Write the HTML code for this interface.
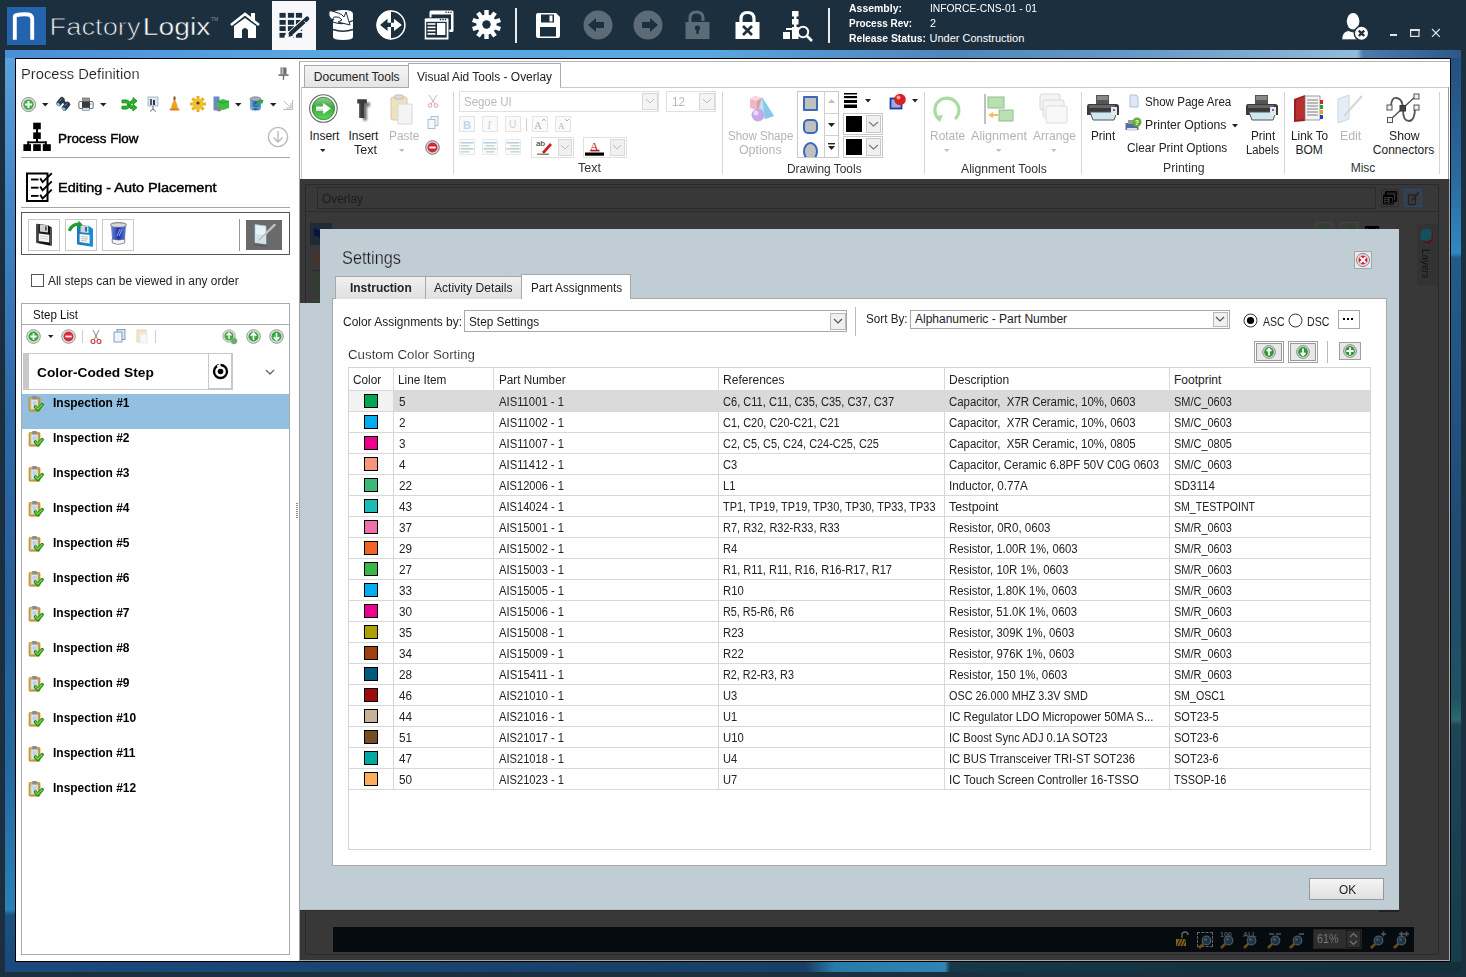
<!DOCTYPE html>
<html><head><meta charset="utf-8"><style>*{margin:0;padding:0;box-sizing:border-box}
html,body{width:1466px;height:977px;overflow:hidden;background:#1c2f3e;font-family:"Liberation Sans",sans-serif;font-size:12px;color:#222;position:relative}
.a{position:absolute}
.t{position:absolute;white-space:nowrap;line-height:1}
svg.a{overflow:visible}
</style></head><body><div class="a" style="left:5px;top:50px;width:1456px;height:8px;background:linear-gradient(90deg,#4a8ed6 0,#5aa6e0 300px,#5ba8e0 700px,#5596d0 800px,#4f86bc 950px,#6a9cc8 1150px,#93bad8 1352px,#4c7caa 1358px,#2c5888 1456px)"></div><div class="a" style="left:5px;top:58px;width:10px;height:914px;background:linear-gradient(180deg,#5aa2dd 0,#4184c6 150px,#2e6aaa 350px,#25609a 550px,#2468a0 700px,#2a80b8 852px,#1b5082 857px,#184a7a 914px)"></div><div class="a" style="left:1451px;top:58px;width:10px;height:914px;background:linear-gradient(180deg,#24507e 0,#2a6aa0 120px,#3088c0 195px,#235a88 200px,#215282 350px,#1f4a70 492px,#1e5262 640px,#2a6a70 662px,#1c4555 667px,#173c4c 914px)"></div><div class="a" style="left:5px;top:962px;width:1456px;height:10px;background:linear-gradient(90deg,#1a4a7c 0,#184470 400px,#173e66 800px,#2a7aa8 830px,#2f84b4 940px,#15384a 945px,#13333f 1200px,#12303c 1456px)"></div><div class="a" style="left:0px;top:0px;width:1466px;height:50px;background:#1c2f3e"></div><div class="a" style="left:7px;top:7px;width:39px;height:38px;background:#2463ae"></div><svg class="a" style="left:7px;top:7px" width="39" height="38" viewBox="0 0 39 38"><path d="M7.8 32.7 V10.2 Q7.8 8.3 10 8 Q16 6.7 21.5 7.5 Q25.2 8.3 25.2 12 V32.7" fill="none" stroke="#fff" stroke-width="3.9"/></svg><svg class="a" style="left:0px;top:0px" width="240" height="50"><text x="49.6" y="35" font-family="Liberation Sans" font-size="23" fill="#f4f6f8" stroke="#1c2f3e" stroke-width="0.75" textLength="91" lengthAdjust="spacingAndGlyphs">Factory</text><text x="142.8" y="35" font-family="Liberation Sans" font-size="23" fill="#ffffff" stroke="#1c2f3e" stroke-width="0.45" textLength="67.5" lengthAdjust="spacingAndGlyphs">Logix</text><text x="211" y="21" font-family="Liberation Sans" font-size="5" fill="#8090a0">TM</text></svg><svg class="a" style="left:229px;top:12px" width="32" height="28" viewBox="0 0 32 28"><path d="M2 13 L16 2 L30 13" fill="none" stroke="#fff" stroke-width="2.6"/><rect x="22" y="1" width="4" height="8" fill="#fff"/><path d="M5 14 L16 6 L27 14 V26 H19 V18 Q16 14 13 18 V26 H5 Z" fill="#fff"/></svg><div class="a" style="left:272px;top:1px;width:44px;height:49px;background:#f8f8fb"></div><svg class="a" style="left:272px;top:0px" width="44" height="50" viewBox="0 0 44 50"><rect x="7.5" y="12.9" width="6.2" height="4.8" fill="#1c2f3e"/><rect x="15.9" y="12.9" width="6.2" height="4.8" fill="#1c2f3e"/><rect x="23.9" y="12.9" width="6.2" height="4.8" fill="#1c2f3e"/><rect x="7.5" y="20.0" width="6.2" height="4.8" fill="#1c2f3e"/><rect x="15.9" y="20.0" width="6.2" height="4.8" fill="#1c2f3e"/><rect x="23.9" y="20.0" width="6.2" height="4.8" fill="#1c2f3e"/><rect x="7.5" y="26.2" width="6.2" height="4.8" fill="#1c2f3e"/><rect x="15.9" y="26.2" width="6.2" height="4.8" fill="#1c2f3e"/><rect x="23.9" y="26.2" width="6.2" height="4.8" fill="#1c2f3e"/><rect x="7.5" y="32.9" width="6.2" height="4.8" fill="#1c2f3e"/><rect x="15.9" y="32.9" width="6.2" height="4.8" fill="#1c2f3e"/><rect x="23.9" y="32.9" width="6.2" height="4.8" fill="#1c2f3e"/><path d="M16.4 36.9 L36 18.5" stroke="#f8f8fb" stroke-width="7.5" stroke-linecap="round"/><path d="M18.6 33.6 L35.2 18.6" stroke="#1c2f3e" stroke-width="4.2" stroke-linecap="round"/><path d="M16.5 37 L17.5 32.5 L21 35.5 Z" fill="#1c2f3e"/><path d="M32.3 21.2 L34.1 23.1" stroke="#f8f8fb" stroke-width="0.9"/></svg><svg class="a" style="left:326px;top:8px" width="30" height="34" viewBox="0 0 30 34"><path d="M7 6 Q7 2 17 2 Q27 2 27 6 V29 Q27 32 17 32 Q7 32 7 29 Z" fill="#fff"/><path d="M7 14 Q17 18 27 12.5" fill="none" stroke="#1c2f3e" stroke-width="1.3"/><path d="M7 21.5 Q17 25 27 21.5" fill="none" stroke="#1c2f3e" stroke-width="1.6"/><path d="M3 4 Q3 2 6 3 L12 5 Q16 6 18 9 L20 4 L24 17 L12 14 L16 12 Q13 8 10 9 L8 9 Q6 11 8 12 L5 11 Q2 8 3 4 Z" fill="#fff" stroke="#1c2f3e" stroke-width="1"/></svg><svg class="a" style="left:376px;top:10px" width="30" height="30" viewBox="0 0 30 30"><circle cx="15" cy="15" r="13.9" fill="#1c2f3e" stroke="#fff" stroke-width="1.5"/><path d="M15 0.5 A14.5 14.5 0 0 0 15 29.5 Z" fill="#fff"/><path d="M4.1 15 L11.5 8.8 V12.8 H15 V17.1 H11.5 V21 Z" fill="#1c2f3e"/><path d="M25.9 15 L18 8.8 V12.8 H15 V17.1 H18 V21 Z" fill="#fff"/></svg><svg class="a" style="left:423px;top:9px" width="32" height="32" viewBox="0 0 32 32"><rect x="6.5" y="1.5" width="24" height="21.5" rx="1.5" fill="#fff"/><rect x="8.5" y="5.5" width="19.5" height="15" fill="#1c2f3e"/><rect x="1.3" y="8.9" width="24.6" height="22" rx="1.5" fill="#fff" stroke="#1c2f3e" stroke-width="0.8"/><rect x="3.2" y="12.8" width="20.5" height="15.8" fill="#1c2f3e"/><rect x="4.5" y="14.2" width="8" height="1.6" fill="#fff"/><rect x="4.5" y="17.5" width="8" height="1.6" fill="#fff"/><rect x="4.5" y="20.8" width="8" height="1.6" fill="#fff"/><rect x="4.5" y="24.1" width="8" height="1.6" fill="#fff"/><rect x="14" y="14" width="8.3" height="12" fill="#fff"/><circle cx="22.5" cy="10.6" r="0.8" fill="#1c2f3e"/><circle cx="20" cy="10.6" r="0.8" fill="#1c2f3e"/><circle cx="17.5" cy="10.6" r="0.8" fill="#1c2f3e"/><circle cx="28" cy="3.3" r="0.8" fill="#1c2f3e"/><circle cx="25.5" cy="3.3" r="0.8" fill="#1c2f3e"/><circle cx="23" cy="3.3" r="0.8" fill="#1c2f3e"/></svg><svg class="a" style="left:472px;top:10px" width="29" height="29" viewBox="0 0 29 29"><rect x="12.3" y="0" width="4.4" height="6" fill="#fff" transform="rotate(0 14.5 14.5)"/><rect x="12.3" y="0" width="4.4" height="6" fill="#fff" transform="rotate(36 14.5 14.5)"/><rect x="12.3" y="0" width="4.4" height="6" fill="#fff" transform="rotate(72 14.5 14.5)"/><rect x="12.3" y="0" width="4.4" height="6" fill="#fff" transform="rotate(108 14.5 14.5)"/><rect x="12.3" y="0" width="4.4" height="6" fill="#fff" transform="rotate(144 14.5 14.5)"/><rect x="12.3" y="0" width="4.4" height="6" fill="#fff" transform="rotate(180 14.5 14.5)"/><rect x="12.3" y="0" width="4.4" height="6" fill="#fff" transform="rotate(216 14.5 14.5)"/><rect x="12.3" y="0" width="4.4" height="6" fill="#fff" transform="rotate(252 14.5 14.5)"/><rect x="12.3" y="0" width="4.4" height="6" fill="#fff" transform="rotate(288 14.5 14.5)"/><rect x="12.3" y="0" width="4.4" height="6" fill="#fff" transform="rotate(324 14.5 14.5)"/><circle cx="14.5" cy="14.5" r="10" fill="#fff"/><circle cx="14.5" cy="14.5" r="4.2" fill="#1c2f3e"/></svg><div class="a" style="left:515px;top:8px;width:2px;height:35px;background:#e8ecef"></div><svg class="a" style="left:535px;top:13px" width="26" height="25" viewBox="0 0 26 25"><path d="M1 2 Q1 0 3 0 H21 L25 4 V23 Q25 25 23 25 H3 Q1 25 1 23 Z" fill="#fff"/><rect x="6" y="1.5" width="13" height="8" fill="#1c2f3e"/><rect x="14.5" y="2.5" width="3" height="6" fill="#fff"/><rect x="5" y="14" width="16" height="9.5" fill="#1c2f3e"/></svg><svg class="a" style="left:583px;top:10px" width="30" height="30" viewBox="0 0 30 30"><circle cx="15" cy="15" r="14.5" fill="#5b6c78"/><path d="M5 15 L13 8 V12 H21 V18 H13 V22 Z" fill="#1c2f3e"/></svg><svg class="a" style="left:633px;top:10px" width="30" height="30" viewBox="0 0 30 30"><circle cx="15" cy="15" r="14.5" fill="#5b6c78"/><path d="M25 15 L17 8 V12 H9 V18 H17 V22 Z" fill="#1c2f3e"/></svg><svg class="a" style="left:685px;top:11px" width="26" height="29" viewBox="0 0 26 29"><path d="M5 12 V7 Q5 1 11.5 1 Q18 1 18 7 V10" fill="none" stroke="#5b6c78" stroke-width="3"/><rect x="0.5" y="11" width="24" height="17" fill="#5b6c78"/><circle cx="12.5" cy="17" r="2.6" fill="#1c2f3e"/><rect x="11.3" y="17" width="2.4" height="6" fill="#1c2f3e"/></svg><svg class="a" style="left:735px;top:11px" width="26" height="29" viewBox="0 0 26 29"><path d="M6 13 V8 Q6 1.5 12.5 1.5 Q19 1.5 19 8 V13" fill="none" stroke="#fff" stroke-width="3.2"/><rect x="0.5" y="11" width="24" height="17" fill="#fff"/><path d="M8 15 L17 24 M17 15 L8 24" stroke="#1c2f3e" stroke-width="2.6"/></svg><svg class="a" style="left:782px;top:10px" width="32" height="32" viewBox="0 0 32 32"><rect x="10" y="1" width="6.5" height="5.5" fill="#fff"/><rect x="10" y="9" width="6.5" height="5.5" fill="#fff"/><rect x="12" y="6" width="2.5" height="3" fill="#fff"/><rect x="12" y="14" width="2.5" height="4" fill="#fff"/><rect x="1" y="22" width="7" height="7" fill="#fff"/><rect x="10" y="17" width="6.5" height="12" fill="#fff"/><rect x="4" y="18" width="12" height="2" fill="#fff"/><circle cx="21" cy="22" r="5.2" fill="#1c2f3e" stroke="#fff" stroke-width="2"/><path d="M24.5 25.5 L30 31" stroke="#fff" stroke-width="2.6"/></svg><div class="a" style="left:828px;top:8px;width:2px;height:35px;background:#e8ecef"></div><div class="t" style="left:849.30px;top:2.69px;font-size:11px;font-weight:700;color:#ffffff;transform:scaleX(0.9526);transform-origin:0 0;">Assembly:</div><div class="t" style="left:849.30px;top:18.19px;font-size:11px;font-weight:700;color:#ffffff;transform:scaleX(0.9038);transform-origin:0 0;">Process Rev:</div><div class="t" style="left:849.30px;top:33.39px;font-size:11px;font-weight:700;color:#ffffff;transform:scaleX(0.9399);transform-origin:0 0;">Release Status:</div><div class="t" style="left:929.50px;top:2.69px;font-size:11px;font-weight:400;color:#ffffff;transform:scaleX(0.9362);transform-origin:0 0;">INFORCE-CNS-01 - 01</div><div class="t" style="left:929.50px;top:18.19px;font-size:11px;font-weight:400;color:#ffffff;transform:scaleX(0.9780);transform-origin:0 0;">2</div><div class="t" style="left:929.50px;top:33.39px;font-size:11px;font-weight:400;color:#ffffff;">Under Construction</div><svg class="a" style="left:1340px;top:12px" width="30" height="30" viewBox="0 0 30 30"><ellipse cx="13.1" cy="9.3" rx="6.3" ry="8.3" fill="#fff"/><path d="M1.8 27.8 Q1.8 19.5 8.5 18.6 Q13 21.5 17.5 18.6 Q24 19.5 24 27.8 Z" fill="#fff" stroke="#1c2f3e" stroke-width="0.8"/><circle cx="21.5" cy="21.3" r="7.2" fill="#fff" stroke="#1c2f3e" stroke-width="1.5"/><path d="M18.8 18.6 L24.2 24 M24.2 18.6 L18.8 24" stroke="#1c2f3e" stroke-width="2.3"/></svg><div class="a" style="left:1390px;top:34px;width:7px;height:2px;background:#e4e4e4"></div><svg class="a" style="left:1410px;top:29px" width="10" height="9" viewBox="0 0 10 9"><rect x="0.6" y="0.6" width="8.4" height="6.8" fill="none" stroke="#e4e4e4" stroke-width="1.2"/><rect x="0" y="0" width="9.6" height="2" fill="#e4e4e4"/></svg><svg class="a" style="left:1431px;top:28px" width="10" height="10" viewBox="0 0 10 10"><path d="M1 1 L8.8 8.8 M8.8 1 L1 8.8" stroke="#e4e4e4" stroke-width="1.2"/></svg><div class="a" style="left:15px;top:58px;width:1436px;height:904px;background:#fff;border:1px solid #000"></div><div class="t" style="left:20.50px;top:67.47px;font-size:14.8px;font-weight:400;color:#222;transform:scaleX(0.9943);transform-origin:0 0;-webkit-text-stroke:0.15px #fff;">Process Definition</div><svg class="a" style="left:278px;top:67px" width="11" height="13" viewBox="0 0 11 13"><path d="M2.5 0.5 H8.5 V7.5 H2.5 Z" fill="#6e6e6e"/><rect x="3.5" y="1" width="2" height="6.5" fill="#b8b8b8"/><rect x="0.5" y="7.3" width="10" height="1.6" fill="#6e6e6e"/><rect x="4.8" y="8.8" width="1.4" height="4" fill="#6e6e6e"/></svg><svg class="a" style="left:21px;top:97px" width="15" height="15" viewBox="0 0 15 15"><circle cx="7.5" cy="7.5" r="7" fill="#e8e8e8" stroke="#888" stroke-width="1"/><circle cx="7.5" cy="7.5" r="5.2" fill="#3cb043"/><path d="M7.5 4 V11 M4 7.5 H11" stroke="#fff" stroke-width="2"/></svg><svg class="a" style="left:42px;top:103px" width="7" height="4" viewBox="0 0 7 4"><path d="M0 0 H6.5 L3.25 3.5 Z" fill="#222"/></svg><svg class="a" style="left:55px;top:97px" width="16" height="14" viewBox="0 0 16 14"><g transform="rotate(40 8 7) scale(0.9) translate(1,0)"><rect x="1" y="2" width="6" height="11" rx="2.5" fill="#2a3a4a"/><rect x="9" y="2" width="6" height="11" rx="2.5" fill="#2a3a4a"/><rect x="6" y="4" width="4" height="3" fill="#2a3a4a"/><ellipse cx="4" cy="11.5" rx="2.2" ry="1.6" fill="#7cc4f0"/><ellipse cx="12" cy="11.5" rx="2.2" ry="1.6" fill="#7cc4f0"/><path d="M3 4 V8 M11 4 V8" stroke="#9ab" stroke-width="0.8"/></g></svg><svg class="a" style="left:78px;top:97px" width="16" height="14" viewBox="0 0 16 14"><rect x="4.5" y="1" width="7" height="4.5" fill="#999" stroke="#555" stroke-width="0.6"/><rect x="0.8" y="4.5" width="14.4" height="7" rx="1.2" fill="#fafafa" stroke="#444" stroke-width="0.8"/><rect x="4" y="5" width="8" height="6" fill="#3a3a3a"/><rect x="4.3" y="10.8" width="7.4" height="2.4" fill="#bfeaf4" stroke="#555" stroke-width="0.5"/><circle cx="13" cy="7" r="0.6" fill="#22f"/></svg><svg class="a" style="left:100px;top:103px" width="7" height="4" viewBox="0 0 7 4"><path d="M0 0 H6.5 L3.25 3.5 Z" fill="#222"/></svg><svg class="a" style="left:121px;top:96px" width="17" height="16" viewBox="0 0 17 16"><path d="M1 4 H5.5 Q7.5 4 8.5 6 L10 9 Q10.8 10.5 12 10.5 V8.5 L16 11.5 L12 15 V13 Q9 13 8 11 L6.5 8 Q6 6.8 5 6.8 H1 Z" fill="#28b428" stroke="#158a15" stroke-width="0.9"/><path d="M1 13 V10.2 H5 Q6 10.2 6.5 9.3 L7.2 8 L8.5 10.6 Q7.5 13 5.5 13 Z" fill="#28b428" stroke="#158a15" stroke-width="0.9"/><path d="M9.2 6 Q10.3 4 12 4 V1.5 L16 5 L12 8.5 V6.8 Q11 6.8 10.5 7.6 Z" fill="#28b428" stroke="#158a15" stroke-width="0.9"/></svg><svg class="a" style="left:147px;top:96px" width="12" height="16" viewBox="0 0 12 16"><rect x="1" y="1" width="10" height="9" fill="#dde8f4" stroke="#9ab" stroke-width="0.8"/><rect x="3" y="3" width="2" height="6" fill="#555"/><rect x="6" y="4" width="2" height="5" fill="#335"/><path d="M6 10 V13 M6 13 L3 15.5 M6 13 L9 15.5" stroke="#666" stroke-width="1"/></svg><svg class="a" style="left:169px;top:96px" width="11" height="16" viewBox="0 0 11 16"><rect x="4.5" y="0.5" width="2" height="4" fill="#8a5020"/><path d="M2 13 Q3 6 5.5 4 Q8 6 9 13 Z" fill="#f0a020"/><rect x="0.5" y="12.5" width="10" height="2" rx="1" fill="#e08010"/></svg><svg class="a" style="left:190px;top:96px" width="16" height="16" viewBox="0 0 16 16"><rect x="6.5" y="0" width="3" height="4" fill="#e8b020" transform="rotate(0 8 8)"/><rect x="6.5" y="0" width="3" height="4" fill="#e8b020" transform="rotate(45 8 8)"/><rect x="6.5" y="0" width="3" height="4" fill="#e8b020" transform="rotate(90 8 8)"/><rect x="6.5" y="0" width="3" height="4" fill="#e8b020" transform="rotate(135 8 8)"/><rect x="6.5" y="0" width="3" height="4" fill="#e8b020" transform="rotate(180 8 8)"/><rect x="6.5" y="0" width="3" height="4" fill="#e8b020" transform="rotate(225 8 8)"/><rect x="6.5" y="0" width="3" height="4" fill="#e8b020" transform="rotate(270 8 8)"/><rect x="6.5" y="0" width="3" height="4" fill="#e8b020" transform="rotate(315 8 8)"/><circle cx="8" cy="8" r="5.5" fill="#f0c030"/><circle cx="8" cy="7" r="1.6" fill="#444"/></svg><svg class="a" style="left:213px;top:96px" width="16" height="16" viewBox="0 0 16 16"><rect x="0.5" y="0.5" width="6" height="14" fill="#6a8ac8"/><path d="M4 5 L10 3 L16 5 V12 L10 14 L4 12 Z" fill="#3cc040"/><path d="M4 5 L10 7 L16 5" stroke="#2a9a2a" fill="none"/><circle cx="6" cy="13" r="2.5" fill="#888"/></svg><svg class="a" style="left:235px;top:103px" width="7" height="4" viewBox="0 0 7 4"><path d="M0 0 H6.5 L3.25 3.5 Z" fill="#222"/></svg><svg class="a" style="left:249px;top:96px" width="15" height="16" viewBox="0 0 15 16"><defs><linearGradient id="db1" x1="0" x2="1"><stop offset="0" stop-color="#7ab8e8"/><stop offset=".5" stop-color="#1a5aa8"/><stop offset="1" stop-color="#5a9ad8"/></linearGradient></defs><path d="M1 3 V13 Q6.5 16 12 13 V3" fill="url(#db1)"/><ellipse cx="6.5" cy="3" rx="5.5" ry="2.2" fill="#aab" stroke="#667" stroke-width="0.6"/><ellipse cx="6.5" cy="13.2" rx="5.5" ry="1.6" fill="none" stroke="#ccd" stroke-width="0.6"/><path d="M6 10 L12 5" stroke="#22b040" stroke-width="2.2"/><path d="M10 3.5 L14.5 4 L13 8.5 Z" fill="#22b040"/></svg><svg class="a" style="left:270px;top:103px" width="7" height="4" viewBox="0 0 7 4"><path d="M0 0 H6.5 L3.25 3.5 Z" fill="#222"/></svg><svg class="a" style="left:283px;top:100px" width="10" height="10" viewBox="0 0 10 10"><path d="M1 1 L8 8 M8 3 V8 H3 M9.5 0 V9.5 H0" stroke="#bbb" stroke-width="1" fill="none"/></svg><svg class="a" style="left:23px;top:122px" width="28" height="30" viewBox="0 0 28 30"><rect x="10.2" y="0.7" width="7.6" height="6.6" fill="#000"/><rect x="10.2" y="10.4" width="7.6" height="6.6" fill="#000"/><rect x="13" y="7" width="2" height="4" fill="#000"/><rect x="13" y="17" width="2" height="3" fill="#000"/><rect x="4.3" y="19.4" width="19.4" height="1.8" fill="#000"/><rect x="4.3" y="19.4" width="1.8" height="4" fill="#000"/><rect x="21.9" y="19.4" width="1.8" height="4" fill="#000"/><rect x="0.4" y="22.2" width="7.6" height="6.8" fill="#000"/><rect x="10.2" y="22.2" width="7.6" height="6.8" fill="#000"/><rect x="19.8" y="22.2" width="8" height="6.8" fill="#000"/></svg><div class="t" style="left:57.60px;top:131.77px;font-size:13.5px;font-weight:400;color:#000;transform:scaleX(0.9936);transform-origin:0 0;-webkit-text-stroke:0.45px #000;">Process Flow</div><svg class="a" style="left:267px;top:126px" width="22" height="22" viewBox="0 0 22 22"><circle cx="11" cy="11" r="9.6" fill="none" stroke="#bbb" stroke-width="1.4"/><path d="M11 5 V16 M6.5 11.5 L11 16 L15.5 11.5" fill="none" stroke="#bbb" stroke-width="1.4"/></svg><div class="a" style="left:21px;top:157px;width:269px;height:1px;background:#a8a8a8"></div><svg class="a" style="left:25px;top:171px" width="28" height="31" viewBox="0 0 28 31"><rect x="2" y="2.5" width="20.5" height="27.5" fill="#fff" stroke="#000" stroke-width="2"/><path d="M6 8.5 H13.5" stroke="#000" stroke-width="1.9"/><path d="M15.2 7.3 L17.6 11.1 L26.8 2.2" stroke="#000" stroke-width="1.9" fill="none" stroke-linejoin="miter"/><path d="M6 16.7 H13.5" stroke="#000" stroke-width="1.9"/><path d="M15.2 15.5 L17.6 19.3 L26.8 10.4" stroke="#000" stroke-width="1.9" fill="none" stroke-linejoin="miter"/><path d="M6 24.9 H13.5" stroke="#000" stroke-width="1.9"/><path d="M15.2 23.7 L17.6 27.5 L26.8 18.6" stroke="#000" stroke-width="1.9" fill="none" stroke-linejoin="miter"/></svg><div class="t" style="left:57.60px;top:181.37px;font-size:13.5px;font-weight:400;color:#000;transform:scaleX(1.0721);transform-origin:0 0;-webkit-text-stroke:0.45px #000;">Editing - Auto Placement</div><div class="a" style="left:21px;top:207px;width:269px;height:1px;background:#a8a8a8"></div><div class="a" style="left:21px;top:212px;width:269px;height:43px;border:1px solid #555;background:#fff"></div><div class="a" style="left:28px;top:219px;width:32px;height:32px;border:1px solid #c8c8c8;background:#fff"></div><div class="a" style="left:65px;top:219px;width:32px;height:32px;border:1px solid #c8c8c8;background:#fff"></div><div class="a" style="left:102px;top:219px;width:32px;height:32px;border:1px solid #c8c8c8;background:#fff"></div><svg class="a" style="left:34px;top:222px" width="20" height="26" viewBox="0 0 20 26"><defs><linearGradient id="fg1" x1="0" x2="1"><stop offset="0" stop-color="#5a5a5a"/><stop offset=".25" stop-color="#1e1e1e"/><stop offset="1" stop-color="#0a0a0a"/></linearGradient></defs><path d="M2 2.5 Q2 1.8 3 1.8 L14 3.2 L17.6 5.5 Q18 6 18 7 V23 Q18 24 17 23.8 L2.5 21 Q2 21 2 20 Z" fill="url(#fg1)"/><path d="M6 2.6 L14 3.6 V10.5 L6 9.5 Z" fill="#cfcfcf"/><rect x="11" y="4.5" width="1.8" height="4" fill="#555"/><path d="M4.8 11.6 L15.3 12.7 V20.6 L4.8 18.9 Z" fill="#f6f6f6"/><path d="M6 14 L14 14.8 M6 16.2 L14 17" stroke="#aaa" stroke-width="0.5"/><path d="M17 6 V23.5" stroke="#eee" stroke-width="0.6"/></svg><svg class="a" style="left:68px;top:221px" width="28" height="28" viewBox="0 0 28 28"><defs><linearGradient id="fg2" x1="0" x2="1"><stop offset="0" stop-color="#1a7ab8"/><stop offset="1" stop-color="#1890d8"/></linearGradient></defs><path d="M9 3.8 L21 5 L24.6 7.5 Q25 8 25 9 V25 Q25 26 24 25.8 L9.5 23.5 Q9 23.4 9 22.5 Z" fill="url(#fg2)"/><path d="M12.5 4.4 L20.5 5.3 V12 L12.5 11.2 Z" fill="#d4d4d4"/><rect x="17" y="6" width="2" height="4.5" fill="#1a70b0"/><path d="M11.6 13 L21.6 14 V22.6 L11.6 21 Z" fill="#fff"/><path d="M13 15.5 L20 16.2 M13 17.5 L20 18.2 M13 19.5 L19 20" stroke="#777" stroke-width="0.5"/><path d="M1.3 9.8 Q4 3 11 3.2" fill="none" stroke="#1ea02e" stroke-width="3.2"/><path d="M10.3 -0.5 L14.5 3.5 L10.3 7.5 Z" fill="#1ea02e"/></svg><svg class="a" style="left:109px;top:222px" width="19" height="25" viewBox="0 0 19 25"><defs><linearGradient id="fg3" x1="0" x2="1"><stop offset="0" stop-color="#6a8ad8"/><stop offset=".5" stop-color="#2030a8"/><stop offset="1" stop-color="#5a80d0"/></linearGradient></defs><ellipse cx="9.5" cy="3" rx="7.8" ry="2.4" fill="#d8d8d8" stroke="#8a8a8a" stroke-width="1.1"/><path d="M2 4 L3.4 20.5 Q9.5 23.5 15.6 20.5 L17 4 Q9.5 7 2 4 Z" fill="url(#fg3)"/><path d="M3 17 Q9.5 19 16 17 L15.6 21 Q9.5 24 3.4 21 Z" fill="#eef4fa" stroke="#666" stroke-width="0.7"/><path d="M8 14 L11 7 M10 14 L13 7" stroke="#a8c0f0" stroke-width="0.8"/></svg><div class="a" style="left:239px;top:219px;width:1px;height:32px;background:#999"></div><div class="a" style="left:246px;top:220px;width:36px;height:30px;background:#6a6a6a"></div><svg class="a" style="left:246px;top:220px" width="36" height="30" viewBox="0 0 36 30"><path d="M9 4.5 L20 6 V24 L9 22.5 Z" fill="#e8f2f8" stroke="#9ec4dc" stroke-width="0.7"/><path d="M9 14 L20 15 V24 L9 22.5 Z" fill="#d0e2ec"/><path d="M8 25 L20 26" stroke="#444" stroke-width="1.2" opacity=".5"/><path d="M12.5 20.5 L28.5 5" stroke="#d8d8d8" stroke-width="2.2" stroke-linecap="round"/><path d="M12.5 20.5 L28.5 5" stroke="#888" stroke-width="0.6"/></svg><div class="a" style="left:31px;top:274px;width:13px;height:13px;border:1px solid #555;background:#fff"></div><div class="t" style="left:48.20px;top:275.14px;font-size:12px;font-weight:400;color:#222;transform:scaleX(0.9922);transform-origin:0 0;">All steps can be viewed in any order</div><div class="a" style="left:21px;top:303px;width:269px;height:652px;border:1px solid #aaa;background:#fff"></div><div class="t" style="left:33.20px;top:309.04px;font-size:12px;font-weight:400;color:#111;transform:scaleX(0.9649);transform-origin:0 0;">Step List</div><div class="a" style="left:22px;top:324px;width:267px;height:1px;background:#aaa"></div><svg class="a" style="left:26px;top:329px" width="15" height="15" viewBox="0 0 15 15"><circle cx="7.5" cy="7.5" r="6.8" fill="#e4e4e4" stroke="#888" stroke-width="0.9"/><circle cx="7.5" cy="7.5" r="5" fill="#34a83c"/><path d="M7.5 4.3 V10.7 M4.3 7.5 H10.7" stroke="#fff" stroke-width="1.8"/></svg><svg class="a" style="left:48px;top:335px" width="6" height="4" viewBox="0 0 6 4"><path d="M0 0 H5.5 L2.75 3 Z" fill="#222"/></svg><svg class="a" style="left:61px;top:329px" width="15" height="15" viewBox="0 0 15 15"><circle cx="7.5" cy="7.5" r="6.8" fill="#e4e4e4" stroke="#888" stroke-width="0.9"/><circle cx="7.5" cy="7.5" r="5" fill="#d82a3a"/><path d="M4.3 7.5 H10.7" stroke="#fff" stroke-width="1.8"/></svg><div class="a" style="left:82px;top:330px;width:1px;height:13px;background:#ccc"></div><svg class="a" style="left:90px;top:329px" width="12" height="15" viewBox="0 0 12 15"><path d="M3 1 L8 11 M9 1 L4 11" stroke="#888" stroke-width="1"/><circle cx="3" cy="12.5" r="2" fill="none" stroke="#d04040" stroke-width="1.2"/><circle cx="9" cy="12.5" r="2" fill="none" stroke="#d04040" stroke-width="1.2"/></svg><svg class="a" style="left:113px;top:329px" width="13" height="14" viewBox="0 0 13 14"><rect x="4" y="0.5" width="8" height="10" fill="#dce8f4" stroke="#6a8aaa" stroke-width="0.8"/><rect x="1" y="3" width="8" height="10" fill="#eef4fa" stroke="#6a8aaa" stroke-width="0.8"/></svg><svg class="a" style="left:136px;top:329px" width="12" height="15" viewBox="0 0 12 15"><rect x="1" y="1" width="9" height="12" fill="#f4e8c8" stroke="#e0d0a8" stroke-width="0.8"/><rect x="4" y="5" width="7" height="9" fill="#f8f8f8" stroke="#e4e4e4" stroke-width="0.8"/></svg><div class="a" style="left:155px;top:330px;width:1px;height:13px;background:#ccc"></div><svg class="a" style="left:222px;top:329px" width="16" height="16" viewBox="0 0 16 16"><circle cx="7" cy="7" r="6.2" fill="#e4e4e4" stroke="#999" stroke-width="0.8"/><circle cx="7" cy="7" r="4.6" fill="#4aa84a"/><path d="M7 4 V10 M4.5 6.5 L7 4 L9.5 6.5" stroke="#fff" stroke-width="1.4" fill="none"/><circle cx="12" cy="12" r="3" fill="#5ab85a" stroke="#999" stroke-width="0.6"/></svg><svg class="a" style="left:246px;top:329px" width="15" height="15" viewBox="0 0 15 15"><circle cx="7.5" cy="7.5" r="6.8" fill="#e4e4e4" stroke="#888" stroke-width="0.9"/><circle cx="7.5" cy="7.5" r="5" fill="#34a83c"/><path d="M7.5 4 V11 M4.8 6.8 L7.5 4 L10.2 6.8" stroke="#fff" stroke-width="1.7" fill="none"/></svg><svg class="a" style="left:269px;top:329px" width="15" height="15" viewBox="0 0 15 15"><circle cx="7.5" cy="7.5" r="6.8" fill="#e4e4e4" stroke="#888" stroke-width="0.9"/><circle cx="7.5" cy="7.5" r="5" fill="#34a83c"/><path d="M7.5 4 V11 M4.8 8.2 L7.5 11 L10.2 8.2" stroke="#fff" stroke-width="1.7" fill="none"/></svg><div class="a" style="left:23px;top:353px;width:210px;height:37px;border:1px solid #c8c8c8;background:#fff"></div><div class="a" style="left:24px;top:354px;width:5px;height:35px;background:#c8c8c8"></div><div class="t" style="left:36.90px;top:365.80px;font-size:13.7px;font-weight:700;color:#000;transform:scaleX(1.0048);transform-origin:0 0;">Color-Coded Step</div><div class="a" style="left:208px;top:353px;width:25px;height:37px;border:1px solid #c8c8c8;border-right:2px solid #c8c8c8;border-bottom:2px solid #c8c8c8;background:#fff"></div><svg class="a" style="left:212px;top:363px" width="17" height="17" viewBox="0 0 17 17"><circle cx="8.5" cy="8.5" r="6.5" fill="none" stroke="#000" stroke-width="2.4"/><circle cx="8.5" cy="8.5" r="2.8" fill="#000"/><path d="M8.5 1 L5 3 L8.5 5" fill="#fff" stroke="#fff" stroke-width="1"/></svg><svg class="a" style="left:265px;top:369px" width="10" height="7" viewBox="0 0 10 7"><path d="M1 1 L5 5 L9 1" fill="none" stroke="#666" stroke-width="1.3"/></svg><div class="a" style="left:22px;top:394px;width:267px;height:35px;background:#93bfe0"></div><svg class="a" style="left:28px;top:395px" width="17" height="18" viewBox="0 0 17 18"><rect x="1" y="2.4" width="11" height="13.8" rx="1.2" fill="#d49a2a" stroke="#b07a20" stroke-width="0.6"/><rect x="1.8" y="3" width="3" height="12" fill="#f0c850" opacity=".7"/><rect x="3" y="4.6" width="7" height="9.6" fill="#dde7f2" stroke="#9fb2c6" stroke-width="0.6"/><path d="M4.5 7 H8.5 M4.5 9 H8.5" stroke="#99a" stroke-width="0.6"/><rect x="4" y="1" width="5" height="3" rx="1" fill="#8e8e8e"/><path d="M7.4 11.8 L9.8 14.6 L14.2 9.6" fill="none" stroke="#1f8a1f" stroke-width="3.4" stroke-linecap="round" stroke-linejoin="round"/><path d="M7.6 11.8 L9.8 14.2 L14 9.8" fill="none" stroke="#78d838" stroke-width="1.4" stroke-linecap="round"/></svg><div class="t" style="left:52.80px;top:397.44px;font-size:12px;font-weight:700;color:#000;transform:scaleX(0.9970);transform-origin:0 0;">Inspection #1</div><svg class="a" style="left:28px;top:430px" width="17" height="18" viewBox="0 0 17 18"><rect x="1" y="2.4" width="11" height="13.8" rx="1.2" fill="#d49a2a" stroke="#b07a20" stroke-width="0.6"/><rect x="1.8" y="3" width="3" height="12" fill="#f0c850" opacity=".7"/><rect x="3" y="4.6" width="7" height="9.6" fill="#dde7f2" stroke="#9fb2c6" stroke-width="0.6"/><path d="M4.5 7 H8.5 M4.5 9 H8.5" stroke="#99a" stroke-width="0.6"/><rect x="4" y="1" width="5" height="3" rx="1" fill="#8e8e8e"/><path d="M7.4 11.8 L9.8 14.6 L14.2 9.6" fill="none" stroke="#1f8a1f" stroke-width="3.4" stroke-linecap="round" stroke-linejoin="round"/><path d="M7.6 11.8 L9.8 14.2 L14 9.8" fill="none" stroke="#78d838" stroke-width="1.4" stroke-linecap="round"/></svg><div class="t" style="left:52.80px;top:432.44px;font-size:12px;font-weight:700;color:#000;transform:scaleX(0.9970);transform-origin:0 0;">Inspection #2</div><svg class="a" style="left:28px;top:465px" width="17" height="18" viewBox="0 0 17 18"><rect x="1" y="2.4" width="11" height="13.8" rx="1.2" fill="#d49a2a" stroke="#b07a20" stroke-width="0.6"/><rect x="1.8" y="3" width="3" height="12" fill="#f0c850" opacity=".7"/><rect x="3" y="4.6" width="7" height="9.6" fill="#dde7f2" stroke="#9fb2c6" stroke-width="0.6"/><path d="M4.5 7 H8.5 M4.5 9 H8.5" stroke="#99a" stroke-width="0.6"/><rect x="4" y="1" width="5" height="3" rx="1" fill="#8e8e8e"/><path d="M7.4 11.8 L9.8 14.6 L14.2 9.6" fill="none" stroke="#1f8a1f" stroke-width="3.4" stroke-linecap="round" stroke-linejoin="round"/><path d="M7.6 11.8 L9.8 14.2 L14 9.8" fill="none" stroke="#78d838" stroke-width="1.4" stroke-linecap="round"/></svg><div class="t" style="left:52.80px;top:467.44px;font-size:12px;font-weight:700;color:#000;transform:scaleX(0.9970);transform-origin:0 0;">Inspection #3</div><svg class="a" style="left:28px;top:500px" width="17" height="18" viewBox="0 0 17 18"><rect x="1" y="2.4" width="11" height="13.8" rx="1.2" fill="#d49a2a" stroke="#b07a20" stroke-width="0.6"/><rect x="1.8" y="3" width="3" height="12" fill="#f0c850" opacity=".7"/><rect x="3" y="4.6" width="7" height="9.6" fill="#dde7f2" stroke="#9fb2c6" stroke-width="0.6"/><path d="M4.5 7 H8.5 M4.5 9 H8.5" stroke="#99a" stroke-width="0.6"/><rect x="4" y="1" width="5" height="3" rx="1" fill="#8e8e8e"/><path d="M7.4 11.8 L9.8 14.6 L14.2 9.6" fill="none" stroke="#1f8a1f" stroke-width="3.4" stroke-linecap="round" stroke-linejoin="round"/><path d="M7.6 11.8 L9.8 14.2 L14 9.8" fill="none" stroke="#78d838" stroke-width="1.4" stroke-linecap="round"/></svg><div class="t" style="left:52.80px;top:502.44px;font-size:12px;font-weight:700;color:#000;transform:scaleX(0.9970);transform-origin:0 0;">Inspection #4</div><svg class="a" style="left:28px;top:535px" width="17" height="18" viewBox="0 0 17 18"><rect x="1" y="2.4" width="11" height="13.8" rx="1.2" fill="#d49a2a" stroke="#b07a20" stroke-width="0.6"/><rect x="1.8" y="3" width="3" height="12" fill="#f0c850" opacity=".7"/><rect x="3" y="4.6" width="7" height="9.6" fill="#dde7f2" stroke="#9fb2c6" stroke-width="0.6"/><path d="M4.5 7 H8.5 M4.5 9 H8.5" stroke="#99a" stroke-width="0.6"/><rect x="4" y="1" width="5" height="3" rx="1" fill="#8e8e8e"/><path d="M7.4 11.8 L9.8 14.6 L14.2 9.6" fill="none" stroke="#1f8a1f" stroke-width="3.4" stroke-linecap="round" stroke-linejoin="round"/><path d="M7.6 11.8 L9.8 14.2 L14 9.8" fill="none" stroke="#78d838" stroke-width="1.4" stroke-linecap="round"/></svg><div class="t" style="left:52.80px;top:537.44px;font-size:12px;font-weight:700;color:#000;transform:scaleX(0.9970);transform-origin:0 0;">Inspection #5</div><svg class="a" style="left:28px;top:570px" width="17" height="18" viewBox="0 0 17 18"><rect x="1" y="2.4" width="11" height="13.8" rx="1.2" fill="#d49a2a" stroke="#b07a20" stroke-width="0.6"/><rect x="1.8" y="3" width="3" height="12" fill="#f0c850" opacity=".7"/><rect x="3" y="4.6" width="7" height="9.6" fill="#dde7f2" stroke="#9fb2c6" stroke-width="0.6"/><path d="M4.5 7 H8.5 M4.5 9 H8.5" stroke="#99a" stroke-width="0.6"/><rect x="4" y="1" width="5" height="3" rx="1" fill="#8e8e8e"/><path d="M7.4 11.8 L9.8 14.6 L14.2 9.6" fill="none" stroke="#1f8a1f" stroke-width="3.4" stroke-linecap="round" stroke-linejoin="round"/><path d="M7.6 11.8 L9.8 14.2 L14 9.8" fill="none" stroke="#78d838" stroke-width="1.4" stroke-linecap="round"/></svg><div class="t" style="left:52.80px;top:572.44px;font-size:12px;font-weight:700;color:#000;transform:scaleX(0.9970);transform-origin:0 0;">Inspection #6</div><svg class="a" style="left:28px;top:605px" width="17" height="18" viewBox="0 0 17 18"><rect x="1" y="2.4" width="11" height="13.8" rx="1.2" fill="#d49a2a" stroke="#b07a20" stroke-width="0.6"/><rect x="1.8" y="3" width="3" height="12" fill="#f0c850" opacity=".7"/><rect x="3" y="4.6" width="7" height="9.6" fill="#dde7f2" stroke="#9fb2c6" stroke-width="0.6"/><path d="M4.5 7 H8.5 M4.5 9 H8.5" stroke="#99a" stroke-width="0.6"/><rect x="4" y="1" width="5" height="3" rx="1" fill="#8e8e8e"/><path d="M7.4 11.8 L9.8 14.6 L14.2 9.6" fill="none" stroke="#1f8a1f" stroke-width="3.4" stroke-linecap="round" stroke-linejoin="round"/><path d="M7.6 11.8 L9.8 14.2 L14 9.8" fill="none" stroke="#78d838" stroke-width="1.4" stroke-linecap="round"/></svg><div class="t" style="left:52.80px;top:607.44px;font-size:12px;font-weight:700;color:#000;transform:scaleX(0.9970);transform-origin:0 0;">Inspection #7</div><svg class="a" style="left:28px;top:640px" width="17" height="18" viewBox="0 0 17 18"><rect x="1" y="2.4" width="11" height="13.8" rx="1.2" fill="#d49a2a" stroke="#b07a20" stroke-width="0.6"/><rect x="1.8" y="3" width="3" height="12" fill="#f0c850" opacity=".7"/><rect x="3" y="4.6" width="7" height="9.6" fill="#dde7f2" stroke="#9fb2c6" stroke-width="0.6"/><path d="M4.5 7 H8.5 M4.5 9 H8.5" stroke="#99a" stroke-width="0.6"/><rect x="4" y="1" width="5" height="3" rx="1" fill="#8e8e8e"/><path d="M7.4 11.8 L9.8 14.6 L14.2 9.6" fill="none" stroke="#1f8a1f" stroke-width="3.4" stroke-linecap="round" stroke-linejoin="round"/><path d="M7.6 11.8 L9.8 14.2 L14 9.8" fill="none" stroke="#78d838" stroke-width="1.4" stroke-linecap="round"/></svg><div class="t" style="left:52.80px;top:642.44px;font-size:12px;font-weight:700;color:#000;transform:scaleX(0.9970);transform-origin:0 0;">Inspection #8</div><svg class="a" style="left:28px;top:675px" width="17" height="18" viewBox="0 0 17 18"><rect x="1" y="2.4" width="11" height="13.8" rx="1.2" fill="#d49a2a" stroke="#b07a20" stroke-width="0.6"/><rect x="1.8" y="3" width="3" height="12" fill="#f0c850" opacity=".7"/><rect x="3" y="4.6" width="7" height="9.6" fill="#dde7f2" stroke="#9fb2c6" stroke-width="0.6"/><path d="M4.5 7 H8.5 M4.5 9 H8.5" stroke="#99a" stroke-width="0.6"/><rect x="4" y="1" width="5" height="3" rx="1" fill="#8e8e8e"/><path d="M7.4 11.8 L9.8 14.6 L14.2 9.6" fill="none" stroke="#1f8a1f" stroke-width="3.4" stroke-linecap="round" stroke-linejoin="round"/><path d="M7.6 11.8 L9.8 14.2 L14 9.8" fill="none" stroke="#78d838" stroke-width="1.4" stroke-linecap="round"/></svg><div class="t" style="left:52.80px;top:677.44px;font-size:12px;font-weight:700;color:#000;transform:scaleX(0.9970);transform-origin:0 0;">Inspection #9</div><svg class="a" style="left:28px;top:710px" width="17" height="18" viewBox="0 0 17 18"><rect x="1" y="2.4" width="11" height="13.8" rx="1.2" fill="#d49a2a" stroke="#b07a20" stroke-width="0.6"/><rect x="1.8" y="3" width="3" height="12" fill="#f0c850" opacity=".7"/><rect x="3" y="4.6" width="7" height="9.6" fill="#dde7f2" stroke="#9fb2c6" stroke-width="0.6"/><path d="M4.5 7 H8.5 M4.5 9 H8.5" stroke="#99a" stroke-width="0.6"/><rect x="4" y="1" width="5" height="3" rx="1" fill="#8e8e8e"/><path d="M7.4 11.8 L9.8 14.6 L14.2 9.6" fill="none" stroke="#1f8a1f" stroke-width="3.4" stroke-linecap="round" stroke-linejoin="round"/><path d="M7.6 11.8 L9.8 14.2 L14 9.8" fill="none" stroke="#78d838" stroke-width="1.4" stroke-linecap="round"/></svg><div class="t" style="left:52.80px;top:712.44px;font-size:12px;font-weight:700;color:#000;transform:scaleX(0.9970);transform-origin:0 0;">Inspection #10</div><svg class="a" style="left:28px;top:745px" width="17" height="18" viewBox="0 0 17 18"><rect x="1" y="2.4" width="11" height="13.8" rx="1.2" fill="#d49a2a" stroke="#b07a20" stroke-width="0.6"/><rect x="1.8" y="3" width="3" height="12" fill="#f0c850" opacity=".7"/><rect x="3" y="4.6" width="7" height="9.6" fill="#dde7f2" stroke="#9fb2c6" stroke-width="0.6"/><path d="M4.5 7 H8.5 M4.5 9 H8.5" stroke="#99a" stroke-width="0.6"/><rect x="4" y="1" width="5" height="3" rx="1" fill="#8e8e8e"/><path d="M7.4 11.8 L9.8 14.6 L14.2 9.6" fill="none" stroke="#1f8a1f" stroke-width="3.4" stroke-linecap="round" stroke-linejoin="round"/><path d="M7.6 11.8 L9.8 14.2 L14 9.8" fill="none" stroke="#78d838" stroke-width="1.4" stroke-linecap="round"/></svg><div class="t" style="left:52.80px;top:747.44px;font-size:12px;font-weight:700;color:#000;transform:scaleX(0.9970);transform-origin:0 0;">Inspection #11</div><svg class="a" style="left:28px;top:780px" width="17" height="18" viewBox="0 0 17 18"><rect x="1" y="2.4" width="11" height="13.8" rx="1.2" fill="#d49a2a" stroke="#b07a20" stroke-width="0.6"/><rect x="1.8" y="3" width="3" height="12" fill="#f0c850" opacity=".7"/><rect x="3" y="4.6" width="7" height="9.6" fill="#dde7f2" stroke="#9fb2c6" stroke-width="0.6"/><path d="M4.5 7 H8.5 M4.5 9 H8.5" stroke="#99a" stroke-width="0.6"/><rect x="4" y="1" width="5" height="3" rx="1" fill="#8e8e8e"/><path d="M7.4 11.8 L9.8 14.6 L14.2 9.6" fill="none" stroke="#1f8a1f" stroke-width="3.4" stroke-linecap="round" stroke-linejoin="round"/><path d="M7.6 11.8 L9.8 14.2 L14 9.8" fill="none" stroke="#78d838" stroke-width="1.4" stroke-linecap="round"/></svg><div class="t" style="left:52.80px;top:782.44px;font-size:12px;font-weight:700;color:#000;transform:scaleX(0.9970);transform-origin:0 0;">Inspection #12</div><div class="a" style="left:296px;top:503px;width:2px;height:1px;background:#888"></div><div class="a" style="left:296px;top:505px;width:2px;height:1px;background:#888"></div><div class="a" style="left:296px;top:507px;width:2px;height:1px;background:#888"></div><div class="a" style="left:296px;top:509px;width:2px;height:1px;background:#888"></div><div class="a" style="left:296px;top:511px;width:2px;height:1px;background:#888"></div><div class="a" style="left:296px;top:513px;width:2px;height:1px;background:#888"></div><div class="a" style="left:296px;top:515px;width:2px;height:1px;background:#888"></div><div class="a" style="left:296px;top:517px;width:2px;height:1px;background:#888"></div><div class="a" style="left:299px;top:61px;width:1151px;height:900px;border-left:1px solid #a0a0a0;border-top:1px solid #b4b4b4;background:#fff"></div><div class="a" style="left:304px;top:65px;width:105px;height:23px;background:linear-gradient(#f4f4f4,#e4e4e4);border:1px solid #aaa;border-bottom:none"></div><div class="t" style="left:313.80px;top:70.74px;font-size:12px;font-weight:400;color:#222;">Document Tools</div><div class="a" style="left:408px;top:63px;width:153px;height:25px;background:#fff;border:1px solid #aaa;border-bottom:none"></div><div class="t" style="left:417.00px;top:70.74px;font-size:12px;font-weight:400;color:#222;transform:scaleX(0.9954);transform-origin:0 0;">Visual Aid Tools - Overlay</div><div class="a" style="left:301px;top:87px;width:107px;height:1px;background:#aaa"></div><div class="a" style="left:560px;top:87px;width:889px;height:1px;background:#c8c8c8"></div><div class="a" style="left:301px;top:87px;width:1px;height:92px;background:#c8c8c8"></div><div class="a" style="left:1448px;top:87px;width:1px;height:92px;background:#999"></div><div class="a" style="left:453px;top:92px;width:1px;height:82px;background:#d4d4d4"></div><div class="a" style="left:722px;top:92px;width:1px;height:82px;background:#d4d4d4"></div><div class="a" style="left:924px;top:92px;width:1px;height:82px;background:#d4d4d4"></div><div class="a" style="left:1081px;top:92px;width:1px;height:82px;background:#d4d4d4"></div><div class="a" style="left:1284px;top:92px;width:1px;height:82px;background:#d4d4d4"></div><div class="a" style="left:1439px;top:92px;width:1px;height:82px;background:#d4d4d4"></div><svg class="a" style="left:308px;top:93px" width="31" height="31" viewBox="0 0 31 31"><defs><linearGradient id="ig" x1="0" y1="0" x2="0" y2="1"><stop offset="0" stop-color="#8fd08f"/><stop offset=".45" stop-color="#3aaa3a"/><stop offset="1" stop-color="#5ad85a"/></linearGradient><filter id="tb" x="-50%" y="-50%" width="200%" height="200%"><feGaussianBlur stdDeviation="1.2"/></filter></defs><circle cx="15.4" cy="15.5" r="13.8" fill="#fff" stroke="#6a6a6a" stroke-width="1.1"/><circle cx="15.4" cy="15.5" r="11.2" fill="url(#ig)" stroke="#2e7a2e" stroke-width="0.8"/><path d="M8 13.4 H15.1 V10.1 L23 15.5 L15.1 21 V18 H8 Z" fill="#fff"/><path d="M8 15.7 H15.1 V18 H8 Z" fill="#ddd"/></svg><div class="t" style="left:309.40px;top:129.84px;font-size:12px;font-weight:400;color:#222;">Insert</div><svg class="a" style="left:320px;top:149px" width="6" height="4" viewBox="0 0 6 4"><path d="M0 0 H5.5 L2.75 3 Z" fill="#222"/></svg><svg class="a" style="left:354px;top:96px" width="22" height="26" viewBox="0 0 22 26"><defs><filter id="tb2" x="-50%" y="-50%" width="200%" height="200%"><feGaussianBlur stdDeviation="1.3"/></filter></defs><path d="M4 5 H13.5 V9 H10.5 V23 H6.5 V9 H4 Z" fill="#000" opacity=".55" filter="url(#tb2)" transform="translate(2.5,1.5)"/><path d="M3.3 3.3 H12.8 V7.4 H10.1 V21.9 H5.2 V7.4 H3.3 Z" fill="#3a3a3a"/><path d="M5.2 7.4 H6.4 V21.9 H5.2 Z" fill="#666"/></svg><div class="t" style="left:348.40px;top:129.84px;font-size:12px;font-weight:400;color:#222;">Insert</div><div class="t" style="left:353.50px;top:143.84px;font-size:12px;font-weight:400;color:#222;transform:scaleX(1.0392);transform-origin:0 0;">Text</div><svg class="a" style="left:390px;top:94px" width="24" height="32" viewBox="0 0 24 32"><rect x="1" y="3" width="16" height="23" rx="2" fill="#efe2c0" stroke="#d8c8a0"/><rect x="5" y="1" width="8" height="4" rx="1" fill="#ddd" stroke="#bbb"/><path d="M8 10 H22 V30 H8 Z" fill="#f4f4f4" stroke="#d8d8d8"/></svg><div class="t" style="left:388.60px;top:129.84px;font-size:12px;font-weight:400;color:#b4b4b4;transform:scaleX(0.9873);transform-origin:0 0;">Paste</div><svg class="a" style="left:399px;top:149px" width="6" height="4" viewBox="0 0 6 4"><path d="M0 0 H5.5 L2.75 3 Z" fill="#bbb"/></svg><svg class="a" style="left:427px;top:95px" width="12" height="13" viewBox="0 0 12 13"><path d="M2 0 L8 9 M10 0 L4 9" stroke="#bbb" stroke-width="1"/><circle cx="3" cy="10.5" r="1.8" fill="none" stroke="#e0a0a0"/><circle cx="9" cy="10.5" r="1.8" fill="none" stroke="#e0a0a0"/></svg><svg class="a" style="left:427px;top:116px" width="12" height="14" viewBox="0 0 12 14"><rect x="4" y="0.5" width="7" height="9" fill="#eef4fa" stroke="#b0c0d0"/><rect x="1" y="3.5" width="7" height="9" fill="#f4f8fc" stroke="#b0c0d0"/></svg><svg class="a" style="left:425px;top:140px" width="15" height="15" viewBox="0 0 15 15"><circle cx="7.5" cy="7.5" r="6.8" fill="#ddd" stroke="#777" stroke-width="1"/><circle cx="7.5" cy="7.5" r="5" fill="#d02a3a"/><path d="M4.3 7.5 H10.7" stroke="#fff" stroke-width="1.8"/></svg><div class="a" style="left:459px;top:91px;width:200px;height:21px;border:1px solid #e0e0e0;background:#fff"></div><div class="t" style="left:464.20px;top:95.54px;font-size:12px;font-weight:400;color:#b8b8b8;transform:scaleX(0.9542);transform-origin:0 0;">Segoe UI</div><div class="a" style="left:642px;top:93px;width:16px;height:17px;border:1px solid #d8d8d8;background:#f4f4f4"></div><svg class="a" style="left:645px;top:98px" width="10" height="6" viewBox="0 0 10 6"><path d="M1 1 L5 5 L9 1" fill="none" stroke="#bbb" stroke-width="1"/></svg><div class="a" style="left:666px;top:91px;width:50px;height:21px;border:1px solid #e0e0e0;background:#fff"></div><div class="t" style="left:671.60px;top:95.54px;font-size:12px;font-weight:400;color:#b8b8b8;transform:scaleX(0.9780);transform-origin:0 0;">12</div><div class="a" style="left:699px;top:93px;width:16px;height:17px;border:1px solid #d8d8d8;background:#f4f4f4"></div><svg class="a" style="left:702px;top:98px" width="10" height="6" viewBox="0 0 10 6"><path d="M1 1 L5 5 L9 1" fill="none" stroke="#bbb" stroke-width="1"/></svg><div class="a" style="left:459px;top:116px;width:16px;height:16px;border:1px solid #e4e4e4;background:#fafafa"></div><svg class="a" style="left:459px;top:116px" width="16" height="16" viewBox="0 0 16 16"><text x="4" y="13" font-family="Liberation Sans" font-size="11" font-weight="700" fill="#c0d4ec">B</text></svg><div class="a" style="left:482px;top:116px;width:16px;height:16px;border:1px solid #e4e4e4;background:#fafafa"></div><svg class="a" style="left:482px;top:116px" width="16" height="16" viewBox="0 0 16 16"><text x="5" y="13" font-family="Liberation Serif" font-size="12" font-style="italic" fill="#c0d4ec">I</text></svg><div class="a" style="left:505px;top:116px;width:16px;height:16px;border:1px solid #e4e4e4;background:#fafafa"></div><svg class="a" style="left:505px;top:116px" width="16" height="16" viewBox="0 0 16 16"><text x="4" y="12" font-family="Liberation Sans" font-size="10" fill="#c0d4ec">U</text></svg><div class="a" style="left:526px;top:118px;width:1px;height:13px;background:#ccc"></div><div class="a" style="left:532px;top:116px;width:16px;height:16px;border:1px solid #e4e4e4;background:#fafafa"></div><svg class="a" style="left:532px;top:116px" width="16" height="16" viewBox="0 0 16 16"><text x="2" y="13" font-family="Liberation Serif" font-size="11" fill="#a8b8c8">A</text><path d="M10 5 L12 3 L14 5" stroke="#a8b8c8" fill="none"/></svg><div class="a" style="left:555px;top:116px;width:16px;height:16px;border:1px solid #e4e4e4;background:#fafafa"></div><svg class="a" style="left:555px;top:116px" width="16" height="16" viewBox="0 0 16 16"><text x="3" y="13" font-family="Liberation Serif" font-size="9" fill="#a8b8c8">A</text><path d="M10 3 L12 5 L14 3" stroke="#a8b8c8" fill="none"/></svg><div class="a" style="left:459px;top:139px;width:16px;height:16px;border:1px solid #e8e8e8;border-radius:2px;background:#fcfcfc"></div><svg class="a" style="left:459px;top:139px" width="16" height="16" viewBox="0 0 16 16"><rect x="1.5" y="3" width="13" height="1.6" fill="#b8d0e8"/><rect x="1.5" y="6" width="9" height="1.6" fill="#c8dcc8"/><rect x="1.5" y="9" width="13" height="1.6" fill="#b8d0e8"/><rect x="1.5" y="12" width="9" height="1.6" fill="#c8dcc8"/></svg><div class="a" style="left:482px;top:139px;width:16px;height:16px;border:1px solid #e8e8e8;border-radius:2px;background:#fcfcfc"></div><svg class="a" style="left:482px;top:139px" width="16" height="16" viewBox="0 0 16 16"><rect x="1.5" y="3" width="13" height="1.6" fill="#b8d0e8"/><rect x="3.5" y="6" width="9" height="1.6" fill="#c8dcc8"/><rect x="1.5" y="9" width="13" height="1.6" fill="#b8d0e8"/><rect x="3.5" y="12" width="9" height="1.6" fill="#c8dcc8"/></svg><div class="a" style="left:505px;top:139px;width:16px;height:16px;border:1px solid #e8e8e8;border-radius:2px;background:#fcfcfc"></div><svg class="a" style="left:505px;top:139px" width="16" height="16" viewBox="0 0 16 16"><rect x="1.5" y="3" width="13" height="1.6" fill="#b8d0e8"/><rect x="5.5" y="6" width="9" height="1.6" fill="#c8dcc8"/><rect x="1.5" y="9" width="13" height="1.6" fill="#b8d0e8"/><rect x="5.5" y="12" width="9" height="1.6" fill="#c8dcc8"/></svg><div class="a" style="left:531px;top:137px;width:43px;height:21px;border:1px solid #e0e0e0;background:#fff"></div><svg class="a" style="left:535px;top:138px" width="20" height="18" viewBox="0 0 20 18"><text x="1" y="8" font-family="Liberation Sans" font-size="8" fill="#222">ab</text><path d="M7 14 L15 5 L17 7 L9 16 Z" fill="#d02020"/><rect x="2" y="15.5" width="12" height="1.5" fill="#888"/></svg><div class="a" style="left:558px;top:139px;width:14px;height:17px;border:1px solid #d8d8d8;background:#f0f0f0"></div><svg class="a" style="left:560px;top:144px" width="10" height="6" viewBox="0 0 10 6"><path d="M1 1 L5 5 L9 1" fill="none" stroke="#bbb" stroke-width="1"/></svg><div class="a" style="left:583px;top:137px;width:44px;height:21px;border:1px solid #e0e0e0;background:#fff"></div><svg class="a" style="left:584px;top:138px" width="22" height="19" viewBox="0 0 22 19"><text x="5.5" y="12.5" font-family="Liberation Serif" font-size="13" fill="#c01818">A</text><rect x="6.5" y="11.8" width="9" height="1.6" fill="#c01818"/><rect x="1" y="14.5" width="19" height="3.2" fill="#000"/></svg><div class="a" style="left:610px;top:139px;width:15px;height:17px;border:1px solid #d8d8d8;background:#f0f0f0"></div><svg class="a" style="left:612px;top:144px" width="10" height="6" viewBox="0 0 10 6"><path d="M1 1 L5 5 L9 1" fill="none" stroke="#bbb" stroke-width="1"/></svg><div class="t" style="left:577.70px;top:162.44px;font-size:12px;font-weight:400;color:#333;transform:scaleX(1.0392);transform-origin:0 0;">Text</div><svg class="a" style="left:745px;top:94px" width="32" height="30" viewBox="0 0 32 30"><path d="M5 5 L10 2 L17 4 V13 L12 16 L5 14 Z" fill="#f0b8c0"/><path d="M5 5 L12 7 L17 4 L10 2 Z" fill="#f8d8dc"/><path d="M12 7 V16 L17 13 V4 Z" fill="#e09aa4"/><path d="M17 3 L29 22 L20 25 L12 21 Z" fill="#b8e4f4"/><path d="M17 3 L20 25 L29 22 Z" fill="#88c8e8"/><circle cx="13" cy="21" r="6.5" fill="#c8a8e8"/><circle cx="11" cy="19" r="2.5" fill="#e8d8f8"/></svg><div class="t" style="left:728.30px;top:130.34px;font-size:12px;font-weight:400;color:#b4b4b4;transform:scaleX(0.9596);transform-origin:0 0;">Show Shape</div><div class="t" style="left:739.40px;top:144.14px;font-size:12px;font-weight:400;color:#b4b4b4;transform:scaleX(1.0301);transform-origin:0 0;">Options</div><div class="a" style="left:797px;top:91px;width:42px;height:67px;border:1px solid #c8c8c8;background:#fff"></div><div class="a" style="left:824px;top:92px;width:1px;height:65px;background:#d0d0d0"></div><div class="a" style="left:825px;top:113px;width:13px;height:1px;background:#d0d0d0"></div><div class="a" style="left:825px;top:135px;width:13px;height:1px;background:#d0d0d0"></div><div class="a" style="left:803px;top:96px;width:15px;height:15px;border:2px solid #3a6ab8;background:#c0c0c0;border-radius:1px"></div><div class="a" style="left:803px;top:119px;width:15px;height:15px;border:2px solid #3a6ab8;background:#c0c0c0;border-radius:5px"></div><div class="a" style="left:798px;top:136px;width:26px;height:21px;overflow:hidden"><div class="a" style="left:5px;top:6px;width:15px;height:19px;border:2px solid #3a6ab8;background:#c0c0c0;border-radius:50%"></div></div><div class="a" style="left:798px;top:157px;width:26px;height:1px;background:#fff"></div><div class="a" style="left:797px;top:157px;width:42px;height:1px;background:#c8c8c8"></div><svg class="a" style="left:827px;top:98px" width="9" height="6" viewBox="0 0 9 6"><path d="M1 5 L4.5 1 L8 5 Z" fill="#c0c0c0"/></svg><svg class="a" style="left:827px;top:122px" width="9" height="6" viewBox="0 0 9 6"><path d="M1 1 L4.5 5 L8 1 Z" fill="#222"/></svg><svg class="a" style="left:827px;top:142px" width="9" height="9" viewBox="0 0 9 9"><rect x="1" y="1" width="7" height="1.4" fill="#222"/><path d="M1 4 L4.5 8 L8 4 Z" fill="#222"/></svg><svg class="a" style="left:843px;top:92px" width="17" height="17" viewBox="0 0 17 17"><rect x="1" y="1" width="13" height="1.5" fill="#000"/><rect x="1" y="4" width="13" height="2.2" fill="#000"/><rect x="1" y="8" width="13" height="3" fill="#000"/><rect x="1" y="12.5" width="13" height="3.5" fill="#000"/></svg><svg class="a" style="left:865px;top:99px" width="7" height="4" viewBox="0 0 7 4"><path d="M0 0 H6 L3 3.5 Z" fill="#222"/></svg><div class="a" style="left:843px;top:113px;width:40px;height:22px;border:1px solid #c8c8c8;background:#fff"></div><div class="a" style="left:846px;top:116px;width:16px;height:16px;background:#000"></div><div class="a" style="left:866px;top:115px;width:15px;height:18px;border:1px solid #c8c8c8;background:#f0f0f0"></div><svg class="a" style="left:868px;top:121px" width="11" height="6" viewBox="0 0 11 6"><path d="M1 1 L5.5 5 L10 1" fill="none" stroke="#777" stroke-width="1.1"/></svg><div class="a" style="left:843px;top:136px;width:40px;height:22px;border:1px solid #c8c8c8;background:#fff"></div><div class="a" style="left:846px;top:139px;width:16px;height:16px;background:#000"></div><div class="a" style="left:866px;top:138px;width:15px;height:18px;border:1px solid #c8c8c8;background:#f0f0f0"></div><svg class="a" style="left:868px;top:144px" width="11" height="6" viewBox="0 0 11 6"><path d="M1 1 L5.5 5 L10 1" fill="none" stroke="#777" stroke-width="1.1"/></svg><svg class="a" style="left:889px;top:92px" width="19" height="18" viewBox="0 0 19 18"><rect x="1.5" y="6.5" width="11" height="10" fill="#9ab0e0" stroke="#1a3aa0" stroke-width="1.8"/><circle cx="11" cy="7.5" r="5.8" fill="#d82020"/><circle cx="9.5" cy="5.5" r="2" fill="#f8a0a0"/></svg><svg class="a" style="left:912px;top:99px" width="7" height="4" viewBox="0 0 7 4"><path d="M0 0 H6 L3 3.5 Z" fill="#222"/></svg><div class="t" style="left:786.90px;top:162.54px;font-size:12px;font-weight:400;color:#333;transform:scaleX(0.9927);transform-origin:0 0;">Drawing Tools</div><svg class="a" style="left:931px;top:94px" width="32" height="30" viewBox="0 0 32 30"><path d="M9 26 A12 12 0 1 1 24 25" fill="none" stroke="#a8dca0" stroke-width="3.2"/><path d="M4 22 L9 28 L12 21 Z" fill="#a8dca0"/></svg><div class="t" style="left:930.00px;top:130.34px;font-size:12px;font-weight:400;color:#b4b4b4;transform:scaleX(0.9956);transform-origin:0 0;">Rotate</div><svg class="a" style="left:944px;top:149px" width="6" height="4" viewBox="0 0 6 4"><path d="M0 0 H5.5 L2.75 3 Z" fill="#c0c0c0"/></svg><svg class="a" style="left:983px;top:93px" width="32" height="32" viewBox="0 0 32 32"><rect x="1" y="1" width="2" height="30" fill="#c0c0c0"/><rect x="5" y="4" width="16" height="11" fill="#b8e0b0" stroke="#90c090"/><rect x="16" y="17" width="14" height="11" fill="#b8e0b0" stroke="#90c090"/><path d="M5 22 L10 19 V21 H15 V23 H10 V25 Z" fill="#f0c060"/></svg><div class="t" style="left:971.00px;top:130.34px;font-size:12px;font-weight:400;color:#b4b4b4;transform:scaleX(1.0476);transform-origin:0 0;">Alignment</div><svg class="a" style="left:996px;top:149px" width="6" height="4" viewBox="0 0 6 4"><path d="M0 0 H5.5 L2.75 3 Z" fill="#c0c0c0"/></svg><svg class="a" style="left:1039px;top:93px" width="30" height="32" viewBox="0 0 30 32"><rect x="1" y="1" width="20" height="16" rx="2" fill="#f4f4f4" stroke="#d8d8d8"/><rect x="4" y="7" width="21" height="17" rx="2" fill="#f4f4f4" stroke="#d8d8d8"/><rect x="7" y="13" width="21" height="17" rx="2" fill="#f8f8f8" stroke="#dcdcdc"/></svg><div class="t" style="left:1033.00px;top:130.34px;font-size:12px;font-weight:400;color:#b4b4b4;transform:scaleX(1.0072);transform-origin:0 0;">Arrange</div><svg class="a" style="left:1051px;top:149px" width="6" height="4" viewBox="0 0 6 4"><path d="M0 0 H5.5 L2.75 3 Z" fill="#c0c0c0"/></svg><div class="t" style="left:960.50px;top:162.54px;font-size:12px;font-weight:400;color:#333;transform:scaleX(1.0155);transform-origin:0 0;">Alignment Tools</div><svg class="a" style="left:1087px;top:94px" width="32" height="28" viewBox="0 0 32 28"><rect x="9" y="1" width="13" height="9" fill="#555"/><rect x="10" y="2" width="11" height="4" fill="#888"/><path d="M2 10 H29 Q32 10 32 13 V21 H0 V13 Q0 10 2 10 Z" fill="#3a3a3a"/><path d="M2 11 H28 V14 H2 Z" fill="#666"/><path d="M3 18 L6 26 H27 L30 18 Z" fill="#d0e8f0" stroke="#555" stroke-width="1"/><rect x="24" y="13" width="6" height="8" fill="#e8e8e8"/><circle cx="27" cy="16" r="1" fill="#2040c0"/></svg><div class="t" style="left:1091.00px;top:129.64px;font-size:12px;font-weight:400;color:#222;transform:scaleX(0.9786);transform-origin:0 0;">Print</div><svg class="a" style="left:1129px;top:94px" width="10" height="14" viewBox="0 0 10 14"><path d="M1 1 H7 L9 3 V13 H1 Z" fill="#dde8f4" stroke="#a8c0dc" stroke-width="1"/></svg><div class="t" style="left:1145.30px;top:96.14px;font-size:12px;font-weight:400;color:#222;transform:scaleX(0.9654);transform-origin:0 0;">Show Page Area</div><svg class="a" style="left:1125px;top:117px" width="17" height="15" viewBox="0 0 17 15"><rect x="0.5" y="6" width="13" height="7" fill="#5070a0"/><rect x="2" y="11" width="10" height="3" fill="#dde"/><rect x="3" y="3" width="6" height="4" fill="#999"/><circle cx="12" cy="5" r="4.5" fill="#68b030"/><text x="9.8" y="8" font-family="Liberation Sans" font-size="7" font-weight="700" fill="#fff">?</text></svg><div class="t" style="left:1145.30px;top:119.04px;font-size:12px;font-weight:400;color:#222;transform:scaleX(1.0158);transform-origin:0 0;">Printer Options</div><svg class="a" style="left:1232px;top:124px" width="7" height="4" viewBox="0 0 7 4"><path d="M0 0 H6 L3 3.5 Z" fill="#222"/></svg><div class="t" style="left:1126.90px;top:142.24px;font-size:12px;font-weight:400;color:#222;transform:scaleX(0.9884);transform-origin:0 0;">Clear Print Options</div><svg class="a" style="left:1246px;top:94px" width="32" height="28" viewBox="0 0 32 28"><rect x="9" y="1" width="13" height="9" fill="#555"/><rect x="10" y="2" width="11" height="4" fill="#888"/><path d="M2 10 H29 Q32 10 32 13 V21 H0 V13 Q0 10 2 10 Z" fill="#3a3a3a"/><path d="M2 11 H28 V14 H2 Z" fill="#666"/><path d="M3 18 L6 26 H27 L30 18 Z" fill="#d0e8f0" stroke="#555" stroke-width="1"/><rect x="24" y="13" width="6" height="8" fill="#e8e8e8"/><circle cx="27" cy="16" r="1" fill="#2040c0"/></svg><div class="t" style="left:1250.60px;top:129.64px;font-size:12px;font-weight:400;color:#222;transform:scaleX(0.9786);transform-origin:0 0;">Print</div><div class="t" style="left:1246.00px;top:143.54px;font-size:12px;font-weight:400;color:#222;transform:scaleX(0.9332);transform-origin:0 0;">Labels</div><div class="t" style="left:1163.00px;top:162.04px;font-size:12px;font-weight:400;color:#333;transform:scaleX(1.0249);transform-origin:0 0;">Printing</div><svg class="a" style="left:1293px;top:94px" width="31" height="29" viewBox="0 0 31 29"><path d="M1 5 L12 1 V27 L1 28 Z" fill="#9a2020"/><path d="M3 6 L11 3 V25 L3 26 Z" fill="#b83030"/><rect x="12" y="2" width="15" height="24" fill="#f4f4f4" stroke="#888" stroke-width="0.8"/><path d="M14 6 H25 M14 9 H25 M14 12 H25 M14 15 H25 M14 18 H25 M14 21 H25" stroke="#666" stroke-width="0.8"/><rect x="27" y="6" width="3" height="4" fill="#d02020"/><rect x="27" y="11" width="3" height="4" fill="#20a040"/><rect x="27" y="16" width="3" height="4" fill="#f0a020"/><rect x="27" y="21" width="3" height="4" fill="#2040c0"/></svg><div class="t" style="left:1290.60px;top:129.64px;font-size:12px;font-weight:400;color:#222;transform:scaleX(0.9813);transform-origin:0 0;">Link To</div><div class="t" style="left:1295.40px;top:143.54px;font-size:12px;font-weight:400;color:#222;">BOM</div><svg class="a" style="left:1335px;top:94px" width="30" height="30" viewBox="0 0 30 30"><path d="M3 5 L14 1 V25 L3 29 Z" fill="#e4eef6" stroke="#c8d8e4"/><path d="M9 22 L27 2" stroke="#d8d8d8" stroke-width="2.2"/></svg><div class="t" style="left:1340.10px;top:129.64px;font-size:12px;font-weight:400;color:#b4b4b4;transform:scaleX(1.0301);transform-origin:0 0;">Edit</div><svg class="a" style="left:1386px;top:93px" width="34" height="32" viewBox="0 0 34 32"><path d="M5 14 Q5 4 11 5 Q17 6 17 17 Q17 28 23 28 Q29 28 29 14" fill="none" stroke="#555" stroke-width="1.8"/><path d="M4 27 L30 3" stroke="#555" stroke-width="1.5"/><rect x="1" y="12" width="5" height="5" fill="#f0f0f0" stroke="#555"/><rect x="28" y="12" width="5" height="5" fill="#f0f0f0" stroke="#555"/><rect x="1.5" y="24.5" width="5" height="5" fill="#f0f0f0" stroke="#555"/><rect x="28" y="1" width="5" height="5" fill="#f0f0f0" stroke="#555"/><rect x="14" y="12.5" width="5.5" height="5.5" fill="#444" stroke="#333"/></svg><div class="t" style="left:1388.60px;top:129.64px;font-size:12px;font-weight:400;color:#222;transform:scaleX(1.0227);transform-origin:0 0;">Show</div><div class="t" style="left:1372.80px;top:143.54px;font-size:12px;font-weight:400;color:#222;">Connectors</div><div class="t" style="left:1350.70px;top:162.04px;font-size:12px;font-weight:400;color:#333;">Misc</div><div class="a" style="left:300px;top:179px;width:1150px;height:782px;background:#383838"></div><div class="a" style="left:1449px;top:179px;width:1px;height:782px;background:#a8a8a8"></div><div class="a" style="left:300px;top:960px;width:1150px;height:1px;background:#a8a8a8"></div><div class="a" style="left:305px;top:184px;width:1134px;height:771px;border:1px solid #2a2a2a"></div><div class="a" style="left:317px;top:187px;width:1059px;height:22px;border:1px solid #2a2a2a"></div><div class="t" style="left:322.00px;top:193.24px;font-size:12px;font-weight:400;color:#1c1c1c;transform:scaleX(0.9921);transform-origin:0 0;">Overlay</div><div class="a" style="left:306px;top:211px;width:1132px;height:1px;background:#2c2c2c"></div><div class="a" style="left:1381px;top:189px;width:18px;height:18px;border:1px solid #2c2c2c;background:#383838"></div><svg class="a" style="left:1381px;top:189px" width="18" height="18" viewBox="0 0 18 18"><rect x="4.5" y="2.5" width="11" height="10" rx="1" fill="#111" stroke="#000" stroke-width="1.2"/><rect x="6" y="4.5" width="8" height="6.5" fill="#383838"/><rect x="2" y="5.5" width="11" height="10" rx="1" fill="#000"/><rect x="3.2" y="8" width="8.6" height="6.5" fill="#383838"/><path d="M4 9.5 H7 M4 11.5 H7 M4 13.5 H7" stroke="#000" stroke-width="1"/><rect x="8.5" y="9" width="2.6" height="5" fill="#000"/></svg><div class="a" style="left:1404px;top:189px;width:18px;height:18px;border:1px solid #1e4a80;background:#3a3e44"></div><svg class="a" style="left:1404px;top:189px" width="18" height="18" viewBox="0 0 18 18"><rect x="4.5" y="6" width="7" height="9.5" rx="1" fill="none" stroke="#222" stroke-width="1.3"/><path d="M8 11.5 L14.5 3.5" stroke="#222" stroke-width="1.8"/><path d="M8 11.5 L7.3 13 L8.8 12.4 Z" fill="#222"/></svg><div class="a" style="left:310px;top:223px;width:22px;height:22px;background:#1e2a36"></div><svg class="a" style="left:313px;top:227px" width="12" height="12" viewBox="0 0 12 12"><path d="M1 1 L10 5 L7 11 L1 8 Z" fill="#0a1440"/></svg><svg class="a" style="left:312px;top:251px" width="9" height="13" viewBox="0 0 9 13"><path d="M8 1 Q3 2 2 10 L1 12 L8 12 Z" fill="#4a3028"/></svg><div class="a" style="left:313px;top:270px;width:8px;height:1px;background:#2a2a2a"></div><svg class="a" style="left:313px;top:278px" width="8" height="12" viewBox="0 0 8 12"><rect x="1" y="1" width="6" height="10" fill="none" stroke="#1e4a1e" stroke-width="1.4" stroke-dasharray="1.4 1"/><path d="M1 6 H7" stroke="#1e4a1e" stroke-width="1.2" stroke-dasharray="1.4 1"/></svg><div class="a" style="left:312px;top:300px;width:8px;height:1px;background:#1e5a1e"></div><div class="a" style="left:1315px;top:222px;width:18px;height:8px;border:1px solid #444;background:#3a3a3a"></div><svg class="a" style="left:1320px;top:224px" width="8" height="5" viewBox="0 0 8 5"><path d="M0.5 5 L4 1 L7.5 5 Z" fill="#1e4a1e"/></svg><div class="a" style="left:1340px;top:222px;width:18px;height:8px;border:1px solid #444;background:#3a3a3a"></div><svg class="a" style="left:1347px;top:224px" width="8" height="5" viewBox="0 0 8 5"><path d="M0.5 5 L4 1 L7.5 5 Z" fill="#1e4a1e"/></svg><div class="a" style="left:1365px;top:226px;width:14px;height:4px;border:2px solid #000;border-bottom:none;background:#383838"></div><div class="a" style="left:1368px;top:228px;width:8px;height:2px;background:#000"></div><div class="a" style="left:1417px;top:224px;width:21px;height:61px;background:#333333"></div><svg class="a" style="left:1419px;top:228px" width="15" height="18" viewBox="0 0 15 18"><path d="M5 5 L10 3 L14 6 V13 L10 16 L5 14 Z" fill="#5a1414"/><path d="M4 1 L10 0.5 L12.5 4 V11 L8 13.5 L2 11.5 L1.5 5 Z" fill="#14505e"/></svg><div class="t" style="left:1420px;top:249px;font-size:11px;color:#121212;writing-mode:vertical-rl;transform:scaleY(0.9);transform-origin:0 0">Layers</div><div class="a" style="left:333px;top:927px;width:1081px;height:25px;background:#060b10"></div><svg class="a" style="left:1174px;top:931px" width="16" height="16" viewBox="0 0 16 16"><path d="M8 7 V4 Q8 1 11 1 Q14 1 14 4" fill="none" stroke="#666" stroke-width="1.4"/><rect x="2" y="8" width="10" height="7" fill="#8a6410"/><path d="M3 15 L6 8 M6 15 L9 8 M9 15 L12 8" stroke="#222" stroke-width="1.2"/></svg><div class="a" style="left:1197px;top:932px;width:16px;height:15px;border:1px dashed #666"></div><svg class="a" style="left:1197px;top:931px" width="17" height="18" viewBox="0 0 17 18"><circle cx="9.5" cy="9.5" r="4.3" fill="#1e3444" stroke="#4a5a66" stroke-width="1.2"/><circle cx="8.5" cy="8.5" r="1.5" fill="#4a6a80" opacity=".7"/><path d="M6.2 12.8 L2 17" stroke="#6a4e1a" stroke-width="2.6"/></svg><svg class="a" style="left:1219px;top:931px" width="17" height="18" viewBox="0 0 17 18"><circle cx="9.5" cy="9.5" r="4.3" fill="#1e3444" stroke="#4a5a66" stroke-width="1.2"/><circle cx="8.5" cy="8.5" r="1.5" fill="#4a6a80" opacity=".7"/><path d="M6.2 12.8 L2 17" stroke="#6a4e1a" stroke-width="2.6"/><text x="1" y="6" font-family="Liberation Sans" font-size="7" font-weight="700" fill="#555">100</text></svg><svg class="a" style="left:1242px;top:931px" width="17" height="18" viewBox="0 0 17 18"><circle cx="9.5" cy="9.5" r="4.3" fill="#1e3444" stroke="#4a5a66" stroke-width="1.2"/><circle cx="8.5" cy="8.5" r="1.5" fill="#4a6a80" opacity=".7"/><path d="M6.2 12.8 L2 17" stroke="#6a4e1a" stroke-width="2.6"/><text x="1" y="6" font-family="Liberation Sans" font-size="7" font-weight="700" fill="#555">ALL</text></svg><svg class="a" style="left:1266px;top:931px" width="17" height="18" viewBox="0 0 17 18"><circle cx="9.5" cy="9.5" r="4.3" fill="#1e3444" stroke="#4a5a66" stroke-width="1.2"/><circle cx="8.5" cy="8.5" r="1.5" fill="#4a6a80" opacity=".7"/><path d="M6.2 12.8 L2 17" stroke="#6a4e1a" stroke-width="2.6"/><path d="M3 3 H8 M10 3 H15" stroke="#555" stroke-width="1.6"/></svg><svg class="a" style="left:1288px;top:931px" width="17" height="18" viewBox="0 0 17 18"><circle cx="9.5" cy="9.5" r="4.3" fill="#1e3444" stroke="#4a5a66" stroke-width="1.2"/><circle cx="8.5" cy="8.5" r="1.5" fill="#4a6a80" opacity=".7"/><path d="M6.2 12.8 L2 17" stroke="#6a4e1a" stroke-width="2.6"/><path d="M11 3 H16" stroke="#555" stroke-width="1.6"/></svg><div class="a" style="left:1313px;top:929px;width:49px;height:20px;background:#2e2e2e;border:1px solid #222"></div><div class="t" style="left:1317.00px;top:933.34px;font-size:12px;font-weight:400;color:#777;transform:scaleX(0.9047);transform-origin:0 0;">61%</div><div class="a" style="left:1346px;top:930px;width:15px;height:18px;border:1px solid #1a1a1a;background:#2e2e2e"></div><svg class="a" style="left:1347px;top:931px" width="13" height="16" viewBox="0 0 13 16"><path d="M3 6 L6.5 2.5 L10 6 M3 10 L6.5 13.5 L10 10" fill="none" stroke="#777" stroke-width="1.1"/></svg><svg class="a" style="left:1369px;top:931px" width="17" height="18" viewBox="0 0 17 18"><circle cx="9.5" cy="9.5" r="4.3" fill="#1e3444" stroke="#4a5a66" stroke-width="1.2"/><circle cx="8.5" cy="8.5" r="1.5" fill="#4a6a80" opacity=".7"/><path d="M6.2 12.8 L2 17" stroke="#6a4e1a" stroke-width="2.6"/><path d="M12 3 H17 M14.5 0.5 V5.5" stroke="#555" stroke-width="1.6"/></svg><svg class="a" style="left:1392px;top:931px" width="17" height="18" viewBox="0 0 17 18"><circle cx="9.5" cy="9.5" r="4.3" fill="#1e3444" stroke="#4a5a66" stroke-width="1.2"/><circle cx="8.5" cy="8.5" r="1.5" fill="#4a6a80" opacity=".7"/><path d="M6.2 12.8 L2 17" stroke="#6a4e1a" stroke-width="2.6"/><path d="M7 3 H12 M9.5 0.5 V5.5 M12 3 H17 M14.5 0.5 V5.5" stroke="#555" stroke-width="1.6"/></svg><div class="a" style="left:320px;top:229px;width:1079px;height:681px;background:#c1cdd4"></div><div class="a" style="left:300px;top:303px;width:100px;height:607px;background:#c1cdd4"></div><div class="a" style="left:301px;top:909px;width:1098px;height:1px;background:#bdbdbd"></div><div class="a" style="left:300px;top:910px;width:1099px;height:1px;background:#2e2e2e"></div><div class="a" style="left:1379px;top:910px;width:20px;height:2px;background:#222"></div><div class="t" style="left:342.40px;top:249.53px;font-size:17.8px;font-weight:400;color:#1e1e1e;transform:scaleX(0.9173);transform-origin:0 0;-webkit-text-stroke:0.25px #c1cdd4;">Settings</div><div class="a" style="left:1354px;top:251px;width:18px;height:18px;border:1px solid #a8a8a8;background:#e8e8e8"></div><svg class="a" style="left:1355px;top:252px" width="16" height="16" viewBox="0 0 16 16"><circle cx="8" cy="8" r="6.5" fill="#eee" stroke="#777" stroke-width="0.9"/><circle cx="8" cy="8" r="4.8" fill="#fff" stroke="#999" stroke-width="0.6"/><circle cx="8" cy="8" r="4.3" fill="#e8103a"/><path d="M5.3 5.3 L10.7 10.7 M10.7 5.3 L5.3 10.7" stroke="#fff" stroke-width="2"/></svg><div class="a" style="left:332px;top:298px;width:1055px;height:568px;background:#fff;border:1px solid #a8a8a8"></div><div class="a" style="left:335px;top:276px;width:91px;height:23px;background:linear-gradient(#f0f0f0,#e0e0e0);border:1px solid #a8a8a8;border-bottom:none"></div><div class="t" style="left:349.50px;top:282.34px;font-size:12px;font-weight:700;color:#222;transform:scaleX(0.9952);transform-origin:0 0;">Instruction</div><div class="a" style="left:425px;top:276px;width:97px;height:23px;background:linear-gradient(#f0f0f0,#e0e0e0);border:1px solid #a8a8a8;border-bottom:none"></div><div class="t" style="left:434.20px;top:282.34px;font-size:12px;font-weight:400;color:#222;transform:scaleX(1.0062);transform-origin:0 0;">Activity Details</div><div class="a" style="left:521px;top:274px;width:110px;height:25px;background:#fff;border:1px solid #a8a8a8;border-bottom:none"></div><div class="a" style="left:522px;top:298px;width:108px;height:1px;background:#fff"></div><div class="t" style="left:530.70px;top:282.34px;font-size:12px;font-weight:400;color:#222;transform:scaleX(0.9767);transform-origin:0 0;">Part Assignments</div><div class="t" style="left:343.00px;top:316.44px;font-size:12px;font-weight:400;color:#222;transform:scaleX(0.9968);transform-origin:0 0;">Color Assignments by:</div><div class="a" style="left:464px;top:310px;width:383px;height:22px;border:1px solid #a8a8a8;background:#fff"></div><div class="t" style="left:469.00px;top:316.44px;font-size:12px;font-weight:400;color:#222;transform:scaleX(0.9825);transform-origin:0 0;">Step Settings</div><div class="a" style="left:830px;top:313px;width:16px;height:17px;border:1px solid #b8b8b8;background:#f0f0f0"></div><svg class="a" style="left:833px;top:318px" width="10" height="7" viewBox="0 0 10 7"><path d="M1 1 L5 5 L9 1" fill="none" stroke="#555" stroke-width="1.2"/></svg><div class="a" style="left:855px;top:307px;width:1px;height:29px;background:#bbb"></div><div class="t" style="left:865.80px;top:313.14px;font-size:12px;font-weight:400;color:#222;transform:scaleX(0.9724);transform-origin:0 0;">Sort By:</div><div class="a" style="left:910px;top:310px;width:320px;height:19px;border:1px solid #a8a8a8;background:#fff"></div><div class="t" style="left:915.00px;top:313.14px;font-size:12px;font-weight:400;color:#222;">Alphanumeric - Part Number</div><div class="a" style="left:1213px;top:312px;width:15px;height:15px;border:1px solid #b8b8b8;background:#f0f0f0"></div><svg class="a" style="left:1215px;top:316px" width="10" height="7" viewBox="0 0 10 7"><path d="M1 1 L5 5 L9 1" fill="none" stroke="#555" stroke-width="1.2"/></svg><svg class="a" style="left:1243px;top:313px" width="15" height="15" viewBox="0 0 15 15"><circle cx="7.5" cy="7.5" r="6.5" fill="#fff" stroke="#333" stroke-width="1"/><circle cx="7.5" cy="7.5" r="3.6" fill="#000"/></svg><div class="t" style="left:1262.80px;top:315.84px;font-size:12px;font-weight:400;color:#222;transform:scaleX(0.8754);transform-origin:0 0;">ASC</div><svg class="a" style="left:1288px;top:313px" width="15" height="15" viewBox="0 0 15 15"><circle cx="7.5" cy="7.5" r="6.5" fill="#fff" stroke="#333" stroke-width="1"/></svg><div class="t" style="left:1307.00px;top:315.84px;font-size:12px;font-weight:400;color:#222;transform:scaleX(0.8841);transform-origin:0 0;">DSC</div><div class="a" style="left:1338px;top:310px;width:22px;height:19px;border:1px solid #a8a8a8;background:#fff"></div><svg class="a" style="left:1343px;top:318px" width="12" height="3" viewBox="0 0 12 3"><rect x="0" y="0" width="2" height="2" fill="#000"/><rect x="4" y="0" width="2" height="2" fill="#000"/><rect x="8" y="0" width="2" height="2" fill="#000"/></svg><div class="t" style="left:348.40px;top:347.50px;font-size:13px;font-weight:400;color:#1a1a1a;transform:scaleX(1.0220);transform-origin:0 0;-webkit-text-stroke:0.15px #fff;">Custom Color Sorting</div><div class="a" style="left:1254px;top:341px;width:30px;height:22px;border:1px solid #a0a0a0;background:#e8e8e8;box-shadow:inset 0 0 0 1px #fff,inset 0 0 0 2px #999"></div><svg class="a" style="left:1262px;top:345px" width="14" height="14" viewBox="0 0 14 14"><circle cx="7" cy="7" r="6.3" fill="#e8e8e8" stroke="#777" stroke-width="0.9"/><circle cx="7" cy="7" r="4.9" fill="#2e9a3a"/><path d="M7 3.8 V10.4 M4.6 6.2 L7 3.7 L9.4 6.2" stroke="#fff" stroke-width="1.7" fill="none"/></svg><div class="a" style="left:1288px;top:341px;width:30px;height:22px;border:1px solid #a0a0a0;background:#e8e8e8;box-shadow:inset 0 0 0 1px #fff,inset 0 0 0 2px #999"></div><svg class="a" style="left:1296px;top:345px" width="14" height="14" viewBox="0 0 14 14"><circle cx="7" cy="7" r="6.3" fill="#e8e8e8" stroke="#777" stroke-width="0.9"/><circle cx="7" cy="7" r="4.9" fill="#2e9a3a"/><path d="M7 3.6 V10.2 M4.6 7.8 L7 10.3 L9.4 7.8" stroke="#fff" stroke-width="1.7" fill="none"/></svg><div class="a" style="left:1327px;top:341px;width:1px;height:22px;background:#bbb"></div><div class="a" style="left:1339px;top:342px;width:22px;height:18px;border:1px solid #a0a0a0;background:#e8e8e8;"></div><svg class="a" style="left:1343px;top:344px" width="14" height="14" viewBox="0 0 14 14"><circle cx="7" cy="7" r="6.3" fill="#e8e8e8" stroke="#777" stroke-width="0.9"/><circle cx="7" cy="7" r="4.9" fill="#2e9a3a"/><path d="M7 3.3 V10.7 M3.3 7 H10.7" stroke="#fff" stroke-width="1.8"/></svg><div class="a" style="left:348px;top:367px;width:1023px;height:483px;border:1px solid #d4d4d4;background:#fff"></div><div class="a" style="left:393px;top:368px;width:1px;height:421px;background:#d8d8d8"></div><div class="a" style="left:493px;top:368px;width:1px;height:421px;background:#d8d8d8"></div><div class="a" style="left:718px;top:368px;width:1px;height:421px;background:#d8d8d8"></div><div class="a" style="left:944px;top:368px;width:1px;height:421px;background:#d8d8d8"></div><div class="a" style="left:1169px;top:368px;width:1px;height:421px;background:#d8d8d8"></div><div class="a" style="left:349px;top:390px;width:1021px;height:1px;background:#d8d8d8"></div><div class="t" style="left:353.00px;top:374.04px;font-size:12px;font-weight:400;color:#222;transform:scaleX(0.9816);transform-origin:0 0;">Color</div><div class="t" style="left:398.10px;top:374.04px;font-size:12px;font-weight:400;color:#222;transform:scaleX(0.9810);transform-origin:0 0;">Line Item</div><div class="t" style="left:498.60px;top:374.04px;font-size:12px;font-weight:400;color:#222;transform:scaleX(0.9791);transform-origin:0 0;">Part Number</div><div class="t" style="left:723.00px;top:374.04px;font-size:12px;font-weight:400;color:#222;transform:scaleX(1.0037);transform-origin:0 0;">References</div><div class="t" style="left:949.40px;top:374.04px;font-size:12px;font-weight:400;color:#222;transform:scaleX(1.0032);transform-origin:0 0;">Description</div><div class="t" style="left:1174.00px;top:374.04px;font-size:12px;font-weight:400;color:#222;">Footprint</div><div class="a" style="left:394px;top:391px;width:976px;height:20px;background:#dadada"></div><div class="a" style="left:349px;top:391px;width:44px;height:20px;background:#f2f2f2"></div><div class="a" style="left:349px;top:411px;width:1021px;height:1px;background:#d8d8d8"></div><div class="a" style="left:364px;top:394px;width:14px;height:14px;background:#00a651;border:1px solid #000"></div><div class="t" style="left:398.50px;top:396.24px;font-size:12px;font-weight:400;color:#222;transform:scaleX(0.9780);transform-origin:0 0;">5</div><div class="t" style="left:498.60px;top:396.24px;font-size:12px;font-weight:400;color:#222;transform:scaleX(0.9394);transform-origin:0 0;">AIS11001 - 1</div><div class="t" style="left:723.00px;top:396.24px;font-size:12px;font-weight:400;color:#222;transform:scaleX(0.9218);transform-origin:0 0;">C6, C11, C11, C35, C35, C37, C37</div><div class="t" style="left:949.40px;top:396.24px;font-size:12px;font-weight:400;color:#222;transform:scaleX(0.9520);transform-origin:0 0;">Capacitor,&nbsp; X7R Ceramic, 10%, 0603</div><div class="t" style="left:1174.00px;top:396.24px;font-size:12px;font-weight:400;color:#222;transform:scaleX(0.9132);transform-origin:0 0;">SM/C_0603</div><div class="a" style="left:349px;top:432px;width:1021px;height:1px;background:#d8d8d8"></div><div class="a" style="left:364px;top:415px;width:14px;height:14px;background:#00aeef;border:1px solid #000"></div><div class="t" style="left:398.50px;top:417.24px;font-size:12px;font-weight:400;color:#222;transform:scaleX(0.9780);transform-origin:0 0;">2</div><div class="t" style="left:498.60px;top:417.24px;font-size:12px;font-weight:400;color:#222;transform:scaleX(0.9394);transform-origin:0 0;">AIS11002 - 1</div><div class="t" style="left:723.00px;top:417.24px;font-size:12px;font-weight:400;color:#222;transform:scaleX(0.9156);transform-origin:0 0;">C1, C20, C20-C21, C21</div><div class="t" style="left:949.40px;top:417.24px;font-size:12px;font-weight:400;color:#222;transform:scaleX(0.9520);transform-origin:0 0;">Capacitor,&nbsp; X7R Ceramic, 10%, 0603</div><div class="t" style="left:1174.00px;top:417.24px;font-size:12px;font-weight:400;color:#222;transform:scaleX(0.9132);transform-origin:0 0;">SM/C_0603</div><div class="a" style="left:349px;top:453px;width:1021px;height:1px;background:#d8d8d8"></div><div class="a" style="left:364px;top:436px;width:14px;height:14px;background:#ec008c;border:1px solid #000"></div><div class="t" style="left:398.50px;top:438.24px;font-size:12px;font-weight:400;color:#222;transform:scaleX(0.9780);transform-origin:0 0;">3</div><div class="t" style="left:498.60px;top:438.24px;font-size:12px;font-weight:400;color:#222;transform:scaleX(0.9394);transform-origin:0 0;">AIS11007 - 1</div><div class="t" style="left:723.00px;top:438.24px;font-size:12px;font-weight:400;color:#222;transform:scaleX(0.9095);transform-origin:0 0;">C2, C5, C5, C24, C24-C25, C25</div><div class="t" style="left:949.40px;top:438.24px;font-size:12px;font-weight:400;color:#222;transform:scaleX(0.9520);transform-origin:0 0;">Capacitor,&nbsp; X5R Ceramic, 10%, 0805</div><div class="t" style="left:1174.00px;top:438.24px;font-size:12px;font-weight:400;color:#222;transform:scaleX(0.9132);transform-origin:0 0;">SM/C_0805</div><div class="a" style="left:349px;top:474px;width:1021px;height:1px;background:#d8d8d8"></div><div class="a" style="left:364px;top:457px;width:14px;height:14px;background:#f69679;border:1px solid #000"></div><div class="t" style="left:398.50px;top:459.24px;font-size:12px;font-weight:400;color:#222;transform:scaleX(0.9780);transform-origin:0 0;">4</div><div class="t" style="left:498.60px;top:459.24px;font-size:12px;font-weight:400;color:#222;transform:scaleX(0.9394);transform-origin:0 0;">AIS11412 - 1</div><div class="t" style="left:723.00px;top:459.24px;font-size:12px;font-weight:400;color:#222;transform:scaleX(0.9260);transform-origin:0 0;">C3</div><div class="t" style="left:949.40px;top:459.24px;font-size:12px;font-weight:400;color:#222;transform:scaleX(0.9550);transform-origin:0 0;">Capacitor, Ceramic 6.8PF 50V C0G 0603</div><div class="t" style="left:1174.00px;top:459.24px;font-size:12px;font-weight:400;color:#222;transform:scaleX(0.9132);transform-origin:0 0;">SM/C_0603</div><div class="a" style="left:349px;top:495px;width:1021px;height:1px;background:#d8d8d8"></div><div class="a" style="left:364px;top:478px;width:14px;height:14px;background:#3cb878;border:1px solid #000"></div><div class="t" style="left:398.50px;top:480.24px;font-size:12px;font-weight:400;color:#222;transform:scaleX(0.9780);transform-origin:0 0;">22</div><div class="t" style="left:498.60px;top:480.24px;font-size:12px;font-weight:400;color:#222;transform:scaleX(0.9275);transform-origin:0 0;">AIS12006 - 1</div><div class="t" style="left:723.00px;top:480.24px;font-size:12px;font-weight:400;color:#222;transform:scaleX(0.9320);transform-origin:0 0;">L1</div><div class="t" style="left:949.40px;top:480.24px;font-size:12px;font-weight:400;color:#222;transform:scaleX(0.9750);transform-origin:0 0;">Inductor, 0.77A</div><div class="t" style="left:1174.00px;top:480.24px;font-size:12px;font-weight:400;color:#222;transform:scaleX(0.9624);transform-origin:0 0;">SD3114</div><div class="a" style="left:349px;top:516px;width:1021px;height:1px;background:#d8d8d8"></div><div class="a" style="left:364px;top:499px;width:14px;height:14px;background:#1cbbb4;border:1px solid #000"></div><div class="t" style="left:398.50px;top:501.24px;font-size:12px;font-weight:400;color:#222;transform:scaleX(0.9780);transform-origin:0 0;">43</div><div class="t" style="left:498.60px;top:501.24px;font-size:12px;font-weight:400;color:#222;transform:scaleX(0.9275);transform-origin:0 0;">AIS14024 - 1</div><div class="t" style="left:723.00px;top:501.24px;font-size:12px;font-weight:400;color:#222;transform:scaleX(0.9127);transform-origin:0 0;">TP1, TP19, TP19, TP30, TP30, TP33, TP33</div><div class="t" style="left:949.40px;top:501.24px;font-size:12px;font-weight:400;color:#222;transform:scaleX(1.0304);transform-origin:0 0;">Testpoint</div><div class="t" style="left:1174.00px;top:501.24px;font-size:12px;font-weight:400;color:#222;transform:scaleX(0.8807);transform-origin:0 0;">SM_TESTPOINT</div><div class="a" style="left:349px;top:537px;width:1021px;height:1px;background:#d8d8d8"></div><div class="a" style="left:364px;top:520px;width:14px;height:14px;background:#f06eaa;border:1px solid #000"></div><div class="t" style="left:398.50px;top:522.24px;font-size:12px;font-weight:400;color:#222;transform:scaleX(0.9780);transform-origin:0 0;">37</div><div class="t" style="left:498.60px;top:522.24px;font-size:12px;font-weight:400;color:#222;transform:scaleX(0.9275);transform-origin:0 0;">AIS15001 - 1</div><div class="t" style="left:723.00px;top:522.24px;font-size:12px;font-weight:400;color:#222;transform:scaleX(0.9156);transform-origin:0 0;">R7, R32, R32-R33, R33</div><div class="t" style="left:949.40px;top:522.24px;font-size:12px;font-weight:400;color:#222;transform:scaleX(0.9632);transform-origin:0 0;">Resistor, 0R0, 0603</div><div class="t" style="left:1174.00px;top:522.24px;font-size:12px;font-weight:400;color:#222;transform:scaleX(0.9132);transform-origin:0 0;">SM/R_0603</div><div class="a" style="left:349px;top:558px;width:1021px;height:1px;background:#d8d8d8"></div><div class="a" style="left:364px;top:541px;width:14px;height:14px;background:#f26522;border:1px solid #000"></div><div class="t" style="left:398.50px;top:543.24px;font-size:12px;font-weight:400;color:#222;transform:scaleX(0.9780);transform-origin:0 0;">29</div><div class="t" style="left:498.60px;top:543.24px;font-size:12px;font-weight:400;color:#222;transform:scaleX(0.9275);transform-origin:0 0;">AIS15002 - 1</div><div class="t" style="left:723.00px;top:543.24px;font-size:12px;font-weight:400;color:#222;transform:scaleX(0.9260);transform-origin:0 0;">R4</div><div class="t" style="left:949.40px;top:543.24px;font-size:12px;font-weight:400;color:#222;transform:scaleX(0.9455);transform-origin:0 0;">Resistor, 1.00R 1%, 0603</div><div class="t" style="left:1174.00px;top:543.24px;font-size:12px;font-weight:400;color:#222;transform:scaleX(0.9132);transform-origin:0 0;">SM/R_0603</div><div class="a" style="left:349px;top:579px;width:1021px;height:1px;background:#d8d8d8"></div><div class="a" style="left:364px;top:562px;width:14px;height:14px;background:#39b54a;border:1px solid #000"></div><div class="t" style="left:398.50px;top:564.24px;font-size:12px;font-weight:400;color:#222;transform:scaleX(0.9780);transform-origin:0 0;">27</div><div class="t" style="left:498.60px;top:564.24px;font-size:12px;font-weight:400;color:#222;transform:scaleX(0.9275);transform-origin:0 0;">AIS15003 - 1</div><div class="t" style="left:723.00px;top:564.24px;font-size:12px;font-weight:400;color:#222;transform:scaleX(0.9234);transform-origin:0 0;">R1, R11, R11, R16, R16-R17, R17</div><div class="t" style="left:949.40px;top:564.24px;font-size:12px;font-weight:400;color:#222;transform:scaleX(0.9473);transform-origin:0 0;">Resistor, 10R 1%, 0603</div><div class="t" style="left:1174.00px;top:564.24px;font-size:12px;font-weight:400;color:#222;transform:scaleX(0.9132);transform-origin:0 0;">SM/R_0603</div><div class="a" style="left:349px;top:600px;width:1021px;height:1px;background:#d8d8d8"></div><div class="a" style="left:364px;top:583px;width:14px;height:14px;background:#00aeef;border:1px solid #000"></div><div class="t" style="left:398.50px;top:585.24px;font-size:12px;font-weight:400;color:#222;transform:scaleX(0.9780);transform-origin:0 0;">33</div><div class="t" style="left:498.60px;top:585.24px;font-size:12px;font-weight:400;color:#222;transform:scaleX(0.9275);transform-origin:0 0;">AIS15005 - 1</div><div class="t" style="left:723.00px;top:585.24px;font-size:12px;font-weight:400;color:#222;transform:scaleX(0.9418);transform-origin:0 0;">R10</div><div class="t" style="left:949.40px;top:585.24px;font-size:12px;font-weight:400;color:#222;transform:scaleX(0.9458);transform-origin:0 0;">Resistor, 1.80K 1%, 0603</div><div class="t" style="left:1174.00px;top:585.24px;font-size:12px;font-weight:400;color:#222;transform:scaleX(0.9132);transform-origin:0 0;">SM/R_0603</div><div class="a" style="left:349px;top:621px;width:1021px;height:1px;background:#d8d8d8"></div><div class="a" style="left:364px;top:604px;width:14px;height:14px;background:#ec008c;border:1px solid #000"></div><div class="t" style="left:398.50px;top:606.24px;font-size:12px;font-weight:400;color:#222;transform:scaleX(0.9780);transform-origin:0 0;">30</div><div class="t" style="left:498.60px;top:606.24px;font-size:12px;font-weight:400;color:#222;transform:scaleX(0.9275);transform-origin:0 0;">AIS15006 - 1</div><div class="t" style="left:723.00px;top:606.24px;font-size:12px;font-weight:400;color:#222;transform:scaleX(0.9011);transform-origin:0 0;">R5, R5-R6, R6</div><div class="t" style="left:949.40px;top:606.24px;font-size:12px;font-weight:400;color:#222;transform:scaleX(0.9458);transform-origin:0 0;">Resistor, 51.0K 1%, 0603</div><div class="t" style="left:1174.00px;top:606.24px;font-size:12px;font-weight:400;color:#222;transform:scaleX(0.9132);transform-origin:0 0;">SM/R_0603</div><div class="a" style="left:349px;top:642px;width:1021px;height:1px;background:#d8d8d8"></div><div class="a" style="left:364px;top:625px;width:14px;height:14px;background:#aba000;border:1px solid #000"></div><div class="t" style="left:398.50px;top:627.24px;font-size:12px;font-weight:400;color:#222;transform:scaleX(0.9780);transform-origin:0 0;">35</div><div class="t" style="left:498.60px;top:627.24px;font-size:12px;font-weight:400;color:#222;transform:scaleX(0.9275);transform-origin:0 0;">AIS15008 - 1</div><div class="t" style="left:723.00px;top:627.24px;font-size:12px;font-weight:400;color:#222;transform:scaleX(0.9418);transform-origin:0 0;">R23</div><div class="t" style="left:949.40px;top:627.24px;font-size:12px;font-weight:400;color:#222;transform:scaleX(0.9492);transform-origin:0 0;">Resistor, 309K 1%, 0603</div><div class="t" style="left:1174.00px;top:627.24px;font-size:12px;font-weight:400;color:#222;transform:scaleX(0.9132);transform-origin:0 0;">SM/R_0603</div><div class="a" style="left:349px;top:663px;width:1021px;height:1px;background:#d8d8d8"></div><div class="a" style="left:364px;top:646px;width:14px;height:14px;background:#a0410d;border:1px solid #000"></div><div class="t" style="left:398.50px;top:648.24px;font-size:12px;font-weight:400;color:#222;transform:scaleX(0.9780);transform-origin:0 0;">34</div><div class="t" style="left:498.60px;top:648.24px;font-size:12px;font-weight:400;color:#222;transform:scaleX(0.9275);transform-origin:0 0;">AIS15009 - 1</div><div class="t" style="left:723.00px;top:648.24px;font-size:12px;font-weight:400;color:#222;transform:scaleX(0.9418);transform-origin:0 0;">R22</div><div class="t" style="left:949.40px;top:648.24px;font-size:12px;font-weight:400;color:#222;transform:scaleX(0.9492);transform-origin:0 0;">Resistor, 976K 1%, 0603</div><div class="t" style="left:1174.00px;top:648.24px;font-size:12px;font-weight:400;color:#222;transform:scaleX(0.9132);transform-origin:0 0;">SM/R_0603</div><div class="a" style="left:349px;top:684px;width:1021px;height:1px;background:#d8d8d8"></div><div class="a" style="left:364px;top:667px;width:14px;height:14px;background:#005b7f;border:1px solid #000"></div><div class="t" style="left:398.50px;top:669.24px;font-size:12px;font-weight:400;color:#222;transform:scaleX(0.9780);transform-origin:0 0;">28</div><div class="t" style="left:498.60px;top:669.24px;font-size:12px;font-weight:400;color:#222;transform:scaleX(0.9394);transform-origin:0 0;">AIS15411 - 1</div><div class="t" style="left:723.00px;top:669.24px;font-size:12px;font-weight:400;color:#222;transform:scaleX(0.9011);transform-origin:0 0;">R2, R2-R3, R3</div><div class="t" style="left:949.40px;top:669.24px;font-size:12px;font-weight:400;color:#222;transform:scaleX(0.9533);transform-origin:0 0;">Resistor, 150 1%, 0603</div><div class="t" style="left:1174.00px;top:669.24px;font-size:12px;font-weight:400;color:#222;transform:scaleX(0.9132);transform-origin:0 0;">SM/R_0603</div><div class="a" style="left:349px;top:705px;width:1021px;height:1px;background:#d8d8d8"></div><div class="a" style="left:364px;top:688px;width:14px;height:14px;background:#9e0b0f;border:1px solid #000"></div><div class="t" style="left:398.50px;top:690.24px;font-size:12px;font-weight:400;color:#222;transform:scaleX(0.9780);transform-origin:0 0;">46</div><div class="t" style="left:498.60px;top:690.24px;font-size:12px;font-weight:400;color:#222;transform:scaleX(0.9275);transform-origin:0 0;">AIS21010 - 1</div><div class="t" style="left:723.00px;top:690.24px;font-size:12px;font-weight:400;color:#222;transform:scaleX(0.9260);transform-origin:0 0;">U3</div><div class="t" style="left:949.40px;top:690.24px;font-size:12px;font-weight:400;color:#222;transform:scaleX(0.9045);transform-origin:0 0;">OSC 26.000 MHZ 3.3V SMD</div><div class="t" style="left:1174.00px;top:690.24px;font-size:12px;font-weight:400;color:#222;transform:scaleX(0.8882);transform-origin:0 0;">SM_OSC1</div><div class="a" style="left:349px;top:726px;width:1021px;height:1px;background:#d8d8d8"></div><div class="a" style="left:364px;top:709px;width:14px;height:14px;background:#c7b299;border:1px solid #000"></div><div class="t" style="left:398.50px;top:711.24px;font-size:12px;font-weight:400;color:#222;transform:scaleX(0.9780);transform-origin:0 0;">44</div><div class="t" style="left:498.60px;top:711.24px;font-size:12px;font-weight:400;color:#222;transform:scaleX(0.9275);transform-origin:0 0;">AIS21016 - 1</div><div class="t" style="left:723.00px;top:711.24px;font-size:12px;font-weight:400;color:#222;transform:scaleX(0.9260);transform-origin:0 0;">U1</div><div class="t" style="left:949.40px;top:711.24px;font-size:12px;font-weight:400;color:#222;transform:scaleX(0.9459);transform-origin:0 0;">IC Regulator LDO Micropower 50MA S...</div><div class="t" style="left:1174.00px;top:711.24px;font-size:12px;font-weight:400;color:#222;transform:scaleX(0.9178);transform-origin:0 0;">SOT23-5</div><div class="a" style="left:349px;top:747px;width:1021px;height:1px;background:#d8d8d8"></div><div class="a" style="left:364px;top:730px;width:14px;height:14px;background:#754c24;border:1px solid #000"></div><div class="t" style="left:398.50px;top:732.24px;font-size:12px;font-weight:400;color:#222;transform:scaleX(0.9780);transform-origin:0 0;">51</div><div class="t" style="left:498.60px;top:732.24px;font-size:12px;font-weight:400;color:#222;transform:scaleX(0.9275);transform-origin:0 0;">AIS21017 - 1</div><div class="t" style="left:723.00px;top:732.24px;font-size:12px;font-weight:400;color:#222;transform:scaleX(0.9418);transform-origin:0 0;">U10</div><div class="t" style="left:949.40px;top:732.24px;font-size:12px;font-weight:400;color:#222;transform:scaleX(0.9321);transform-origin:0 0;">IC Boost Sync ADJ 0.1A SOT23</div><div class="t" style="left:1174.00px;top:732.24px;font-size:12px;font-weight:400;color:#222;transform:scaleX(0.9178);transform-origin:0 0;">SOT23-6</div><div class="a" style="left:349px;top:768px;width:1021px;height:1px;background:#d8d8d8"></div><div class="a" style="left:364px;top:751px;width:14px;height:14px;background:#00a99d;border:1px solid #000"></div><div class="t" style="left:398.50px;top:753.24px;font-size:12px;font-weight:400;color:#222;transform:scaleX(0.9780);transform-origin:0 0;">47</div><div class="t" style="left:498.60px;top:753.24px;font-size:12px;font-weight:400;color:#222;transform:scaleX(0.9275);transform-origin:0 0;">AIS21018 - 1</div><div class="t" style="left:723.00px;top:753.24px;font-size:12px;font-weight:400;color:#222;transform:scaleX(0.9260);transform-origin:0 0;">U4</div><div class="t" style="left:949.40px;top:753.24px;font-size:12px;font-weight:400;color:#222;transform:scaleX(0.9346);transform-origin:0 0;">IC BUS Trransceiver TRI-ST SOT236</div><div class="t" style="left:1174.00px;top:753.24px;font-size:12px;font-weight:400;color:#222;transform:scaleX(0.9178);transform-origin:0 0;">SOT23-6</div><div class="a" style="left:349px;top:789px;width:1021px;height:1px;background:#d8d8d8"></div><div class="a" style="left:364px;top:772px;width:14px;height:14px;background:#fbaf5d;border:1px solid #000"></div><div class="t" style="left:398.50px;top:774.24px;font-size:12px;font-weight:400;color:#222;transform:scaleX(0.9780);transform-origin:0 0;">50</div><div class="t" style="left:498.60px;top:774.24px;font-size:12px;font-weight:400;color:#222;transform:scaleX(0.9275);transform-origin:0 0;">AIS21023 - 1</div><div class="t" style="left:723.00px;top:774.24px;font-size:12px;font-weight:400;color:#222;transform:scaleX(0.9260);transform-origin:0 0;">U7</div><div class="t" style="left:949.40px;top:774.24px;font-size:12px;font-weight:400;color:#222;transform:scaleX(0.9618);transform-origin:0 0;">IC Touch Screen Controller 16-TSSO</div><div class="t" style="left:1174.00px;top:774.24px;font-size:12px;font-weight:400;color:#222;transform:scaleX(0.9021);transform-origin:0 0;">TSSOP-16</div><div class="a" style="left:1309px;top:878px;width:75px;height:22px;border:1px solid #999;background:linear-gradient(#f4f4f4,#e0e0e0)"></div><div class="t" style="left:1338.50px;top:882.60px;font-size:13px;font-weight:400;color:#222;transform:scaleX(0.9157);transform-origin:0 0;">OK</div></body></html>
